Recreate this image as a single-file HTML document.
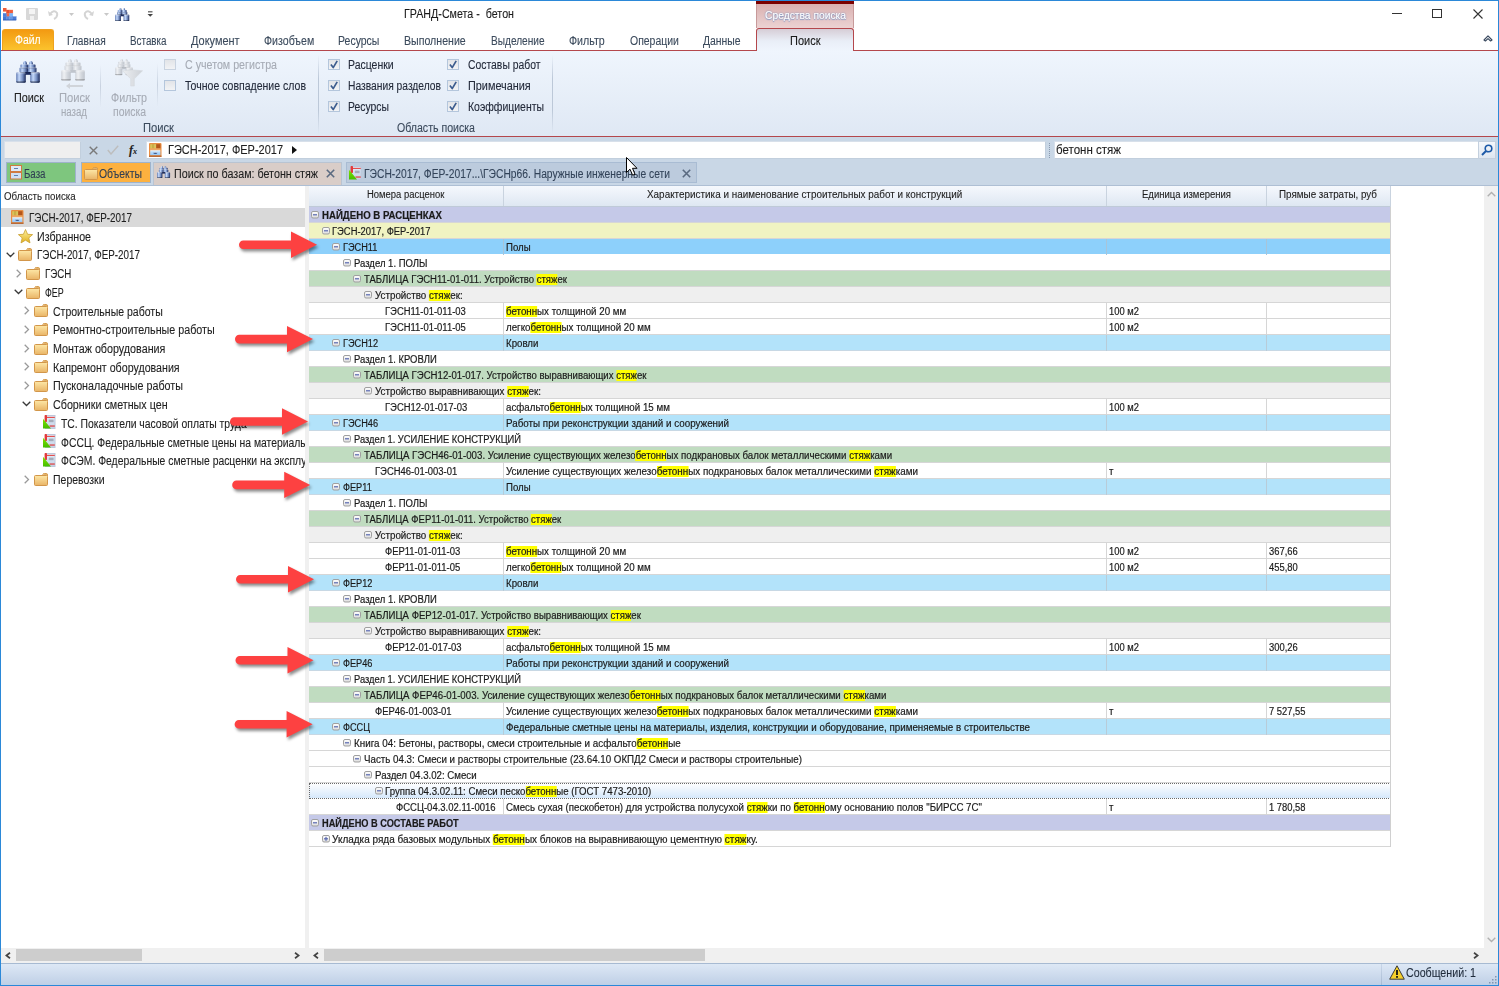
<!DOCTYPE html><html><head><meta charset="utf-8"><style>
*{margin:0;padding:0;box-sizing:border-box}
html,body{width:1499px;height:986px;overflow:hidden;background:#fff;font-family:"Liberation Sans",sans-serif;color:#1e1e1e}
.a{position:absolute}
.t{white-space:nowrap;transform-origin:0 50%;-webkit-text-stroke:0.1px currentColor}
.g{-webkit-text-stroke:0.18px currentColor}
.hl{background:#ffff00}
</style></head><body><div class="a" style="left:0px;top:0px;width:1499px;height:986px;background:#fff"></div>
<svg class="a" style="left:3px;top:8px;" width="15" height="13" viewBox="0 0 15 13"><rect x="0" y="0" width="3.3" height="3.4" fill="#ee5a36" stroke="#ee5a36" stroke-width=".3"/><rect x="3.3" y="2" width="3.3" height="3.4" fill="#e8502e" stroke="#e8502e" stroke-width=".3"/><rect x="3.3" y="5.3" width="3.3" height="3.4" fill="#f26a48" stroke="#f26a48" stroke-width=".3"/><rect x="6.6" y="2" width="3.3" height="3.4" fill="#ef5e3c" stroke="#ef5e3c" stroke-width=".3"/><rect x="0" y="5.3" width="3.3" height="3.4" fill="#4a80dc" stroke="#4a80dc" stroke-width=".3"/><rect x="6.6" y="5.3" width="3.3" height="3.4" fill="#7ab4f8" stroke="#7ab4f8" stroke-width=".3"/><rect x="0" y="8.6" width="3.3" height="3.4" fill="#4478d4" stroke="#4478d4" stroke-width=".3"/><rect x="3.3" y="8.6" width="3.3" height="3.4" fill="#5a8ce0" stroke="#5a8ce0" stroke-width=".3"/><rect x="6.6" y="8.6" width="3.3" height="3.4" fill="#6a98e4" stroke="#6a98e4" stroke-width=".3"/><rect x="9.9" y="8.6" width="3.3" height="3.4" fill="#4a7cd6" stroke="#4a7cd6" stroke-width=".3"/><path d="M0 12h13.2" stroke="#2a58b0" stroke-width=".8"/></svg>
<svg class="a" style="left:26px;top:8px;" width="12" height="12" viewBox="0 0 12 12"><rect x="0" y="0" width="12" height="12" rx="1" fill="#d8d8d8"/><rect x="3" y="1" width="6" height="5" fill="#f4f4f4"/><rect x="4" y="8" width="4" height="4" fill="#f0f0f0"/></svg>
<svg class="a" style="left:48px;top:9px;" width="11" height="11" viewBox="0 0 11 11"><path d="M2 5 Q6 0 9 4 Q10 8 6 10" fill="none" stroke="#d4d4d4" stroke-width="2"/><path d="M0 2 L1 7 L5 6 Z" fill="#d4d4d4"/></svg>
<svg class="a" style="left:69px;top:13px;" width="5" height="3" viewBox="0 0 5 3"><path d="M0 0h5l-2.5 3z" fill="#c8c8c8"/></svg>
<svg class="a" style="left:83px;top:9px;" width="11" height="11" viewBox="0 0 11 11"><path d="M9 5 Q5 0 2 4 Q1 8 5 10" fill="none" stroke="#d4d4d4" stroke-width="2"/><path d="M11 2 L10 7 L6 6 Z" fill="#d4d4d4"/></svg>
<svg class="a" style="left:104px;top:13px;" width="5" height="3" viewBox="0 0 5 3"><path d="M0 0h5l-2.5 3z" fill="#c8c8c8"/></svg>
<svg class="a" style="left:115px;top:8px;" width="15" height="14" viewBox="0 0 15 14"><defs><linearGradient id="bg115_8_60" x1="0" x2="1"><stop offset="0" stop-color="#5d78b2"/><stop offset=".3" stop-color="#c6dafb"/><stop offset=".65" stop-color="#7891c4"/><stop offset="1" stop-color="#1b2a5c"/></linearGradient><linearGradient id="bg115_8_60v" x1="0" y1="0" x2="0" y2="1"><stop offset="0" stop-color="#fff" stop-opacity=".45"/><stop offset=".25" stop-color="#fff" stop-opacity="0"/><stop offset=".8" stop-color="#000" stop-opacity="0"/><stop offset="1" stop-color="#0f1b40" stop-opacity=".8"/></linearGradient></defs><g transform="scale(0.6)"><g fill="url(#bg115_8_60)"><path d="M7 4 Q7 0 9 0 Q11 0 11 4Z"/><path d="M13 4 Q13 0 15 0 Q17 0 17 4Z"/><rect x="4.5" y="3.2" width="7.5" height="4" rx="1.2"/><rect x="12" y="3.2" width="7.5" height="4" rx="1.2"/><rect x="3.5" y="6.5" width="8.5" height="5" rx="1"/><rect x="12" y="6.5" width="8.5" height="5" rx="1"/><rect x="0.2" y="11" width="9.6" height="10.8" rx="1.5"/><rect x="14.2" y="11" width="9.6" height="10.8" rx="1.5"/></g><rect x="9" y="11" width="6" height="2.8" fill="#1b2a5c"/><g fill="url(#bg115_8_60v)"><rect x="4.5" y="3.2" width="7.5" height="4" rx="1.2"/><rect x="12" y="3.2" width="7.5" height="4" rx="1.2"/><rect x="3.5" y="6.5" width="8.5" height="5" rx="1"/><rect x="12" y="6.5" width="8.5" height="5" rx="1"/><rect x="0.2" y="11" width="9.6" height="10.8" rx="1.5"/><rect x="14.2" y="11" width="9.6" height="10.8" rx="1.5"/></g></g></svg>
<svg class="a" style="left:147px;top:10px;" width="7" height="8" viewBox="0 0 7 8"><rect x="1" y="1" width="4.5" height="1.5" fill="#777"/><path d="M0.5 4h5.5l-2.75 2.8z" fill="#444"/></svg>
<div class="a t" style="left:404px;top:7.30px;font-size:12px;line-height:14.40px;color:#1a1a1a;transform:scaleX(0.8914);">ГРАНД-Смета -&nbsp; бетон</div>
<div class="a" style="left:756px;top:1px;width:98px;height:3px;background:#7a0000"></div>
<div class="a" style="left:756px;top:4px;width:98px;height:24px;background:linear-gradient(#d9b0b0,#ecd3d3);border-left:1px solid #c79a9a;border-right:1px solid #c79a9a"></div>
<div class="a t" style="left:765px;top:8.90px;font-size:11px;line-height:13.20px;color:#ffffff;transform:scaleX(0.9345);text-shadow:0 0 2px #6f86b8,0 1px 1px #8da0c8;">Средства поиска</div>
<div class="a" style="left:1392px;top:13px;width:10px;height:1px;background:#333"></div>
<div class="a" style="left:1432px;top:9px;width:10px;height:9px;border:1px solid #333"></div>
<svg class="a" style="left:1473px;top:9px;" width="10" height="10" viewBox="0 0 10 10"><path d="M0.5 0.5L9.5 9.5M9.5 0.5L0.5 9.5" stroke="#333" stroke-width="1.1"/></svg>
<div class="a" style="left:2px;top:29px;width:52px;height:22px;background:linear-gradient(#f39a12,#fbc52f);border:1px solid #eea21e;border-bottom:none;border-radius:3px 3px 0 0"></div>
<div class="a t" style="left:15px;top:33.40px;font-size:12px;line-height:14.40px;color:#ffffff;transform:scaleX(0.8643);">Файл</div>
<div class="a t" style="left:66.8px;top:33.90px;font-size:12px;line-height:14.40px;color:#3b4a5c;transform:scaleX(0.8473);">Главная</div>
<div class="a t" style="left:130.2px;top:33.90px;font-size:12px;line-height:14.40px;color:#3b4a5c;transform:scaleX(0.8206);">Вставка</div>
<div class="a t" style="left:191px;top:33.90px;font-size:12px;line-height:14.40px;color:#3b4a5c;transform:scaleX(0.9129);">Документ</div>
<div class="a t" style="left:263.6px;top:33.90px;font-size:12px;line-height:14.40px;color:#3b4a5c;transform:scaleX(0.8843);">Физобъем</div>
<div class="a t" style="left:338.4px;top:33.90px;font-size:12px;line-height:14.40px;color:#3b4a5c;transform:scaleX(0.8750);">Ресурсы</div>
<div class="a t" style="left:404.3px;top:33.90px;font-size:12px;line-height:14.40px;color:#3b4a5c;transform:scaleX(0.8834);">Выполнение</div>
<div class="a t" style="left:490.7px;top:33.90px;font-size:12px;line-height:14.40px;color:#3b4a5c;transform:scaleX(0.8429);">Выделение</div>
<div class="a t" style="left:569px;top:33.90px;font-size:12px;line-height:14.40px;color:#3b4a5c;transform:scaleX(0.8880);">Фильтр</div>
<div class="a t" style="left:629.5px;top:33.90px;font-size:12px;line-height:14.40px;color:#3b4a5c;transform:scaleX(0.8711);">Операции</div>
<div class="a t" style="left:703px;top:33.90px;font-size:12px;line-height:14.40px;color:#3b4a5c;transform:scaleX(0.8673);">Данные</div>
<div class="a" style="left:1px;top:50px;width:1497px;height:1px;background:#b4474c"></div>
<div class="a" style="left:756px;top:28px;width:98px;height:23px;background:linear-gradient(#d6cdd6 0%,#e9eef7 55%,#eff5fd 100%);border:1px solid #b4474c;border-bottom:none;border-radius:3px 3px 0 0"></div>
<div class="a t" style="left:790px;top:33.90px;font-size:12px;line-height:14.40px;color:#1a1a1a;transform:scaleX(0.9172);">Поиск</div>
<svg class="a" style="left:1483px;top:34px;" width="10" height="8" viewBox="0 0 10 8"><path d="M1 6 L5 1.8 L9 6 L7.6 7 L5 4.6 L2.4 7 Z" fill="#fff" stroke="#3a4a60" stroke-width="1.1" stroke-linejoin="round"/></svg>
<div class="a" style="left:1px;top:51px;width:1497px;height:85px;background:linear-gradient(#eff5fd,#dfe8f4)"></div>
<div class="a" style="left:1px;top:136px;width:1497px;height:1px;background:#b4474c"></div>
<svg class="a" style="left:16px;top:61px;" width="25" height="23" viewBox="0 0 25 23"><defs><linearGradient id="bg16_61_100" x1="0" x2="1"><stop offset="0" stop-color="#5d78b2"/><stop offset=".3" stop-color="#c6dafb"/><stop offset=".65" stop-color="#7891c4"/><stop offset="1" stop-color="#1b2a5c"/></linearGradient><linearGradient id="bg16_61_100v" x1="0" y1="0" x2="0" y2="1"><stop offset="0" stop-color="#fff" stop-opacity=".45"/><stop offset=".25" stop-color="#fff" stop-opacity="0"/><stop offset=".8" stop-color="#000" stop-opacity="0"/><stop offset="1" stop-color="#0f1b40" stop-opacity=".8"/></linearGradient></defs><g transform="scale(1.0)"><g fill="url(#bg16_61_100)"><path d="M7 4 Q7 0 9 0 Q11 0 11 4Z"/><path d="M13 4 Q13 0 15 0 Q17 0 17 4Z"/><rect x="4.5" y="3.2" width="7.5" height="4" rx="1.2"/><rect x="12" y="3.2" width="7.5" height="4" rx="1.2"/><rect x="3.5" y="6.5" width="8.5" height="5" rx="1"/><rect x="12" y="6.5" width="8.5" height="5" rx="1"/><rect x="0.2" y="11" width="9.6" height="10.8" rx="1.5"/><rect x="14.2" y="11" width="9.6" height="10.8" rx="1.5"/></g><rect x="9" y="11" width="6" height="2.8" fill="#1b2a5c"/><g fill="url(#bg16_61_100v)"><rect x="4.5" y="3.2" width="7.5" height="4" rx="1.2"/><rect x="12" y="3.2" width="7.5" height="4" rx="1.2"/><rect x="3.5" y="6.5" width="8.5" height="5" rx="1"/><rect x="12" y="6.5" width="8.5" height="5" rx="1"/><rect x="0.2" y="11" width="9.6" height="10.8" rx="1.5"/><rect x="14.2" y="11" width="9.6" height="10.8" rx="1.5"/></g></g></svg>
<div class="a t" style="left:14px;top:90.90px;font-size:12px;line-height:14.40px;color:#202020;transform:scaleX(0.9022);">Поиск</div>
<svg class="a" style="left:61px;top:59px;" width="25" height="23" viewBox="0 0 25 23"><defs><linearGradient id="bg61_59_100" x1="0" x2="1"><stop offset="0" stop-color="#cfd3da"/><stop offset=".3" stop-color="#eef0f3"/><stop offset=".65" stop-color="#d3d7dd"/><stop offset="1" stop-color="#bfc4cc"/></linearGradient><linearGradient id="bg61_59_100v" x1="0" y1="0" x2="0" y2="1"><stop offset="0" stop-color="#fff" stop-opacity=".45"/><stop offset=".25" stop-color="#fff" stop-opacity="0"/><stop offset=".8" stop-color="#000" stop-opacity="0"/><stop offset="1" stop-color="#c2c6cd" stop-opacity=".8"/></linearGradient></defs><g transform="scale(1.0)"><g fill="url(#bg61_59_100)"><path d="M7 4 Q7 0 9 0 Q11 0 11 4Z"/><path d="M13 4 Q13 0 15 0 Q17 0 17 4Z"/><rect x="4.5" y="3.2" width="7.5" height="4" rx="1.2"/><rect x="12" y="3.2" width="7.5" height="4" rx="1.2"/><rect x="3.5" y="6.5" width="8.5" height="5" rx="1"/><rect x="12" y="6.5" width="8.5" height="5" rx="1"/><rect x="0.2" y="11" width="9.6" height="10.8" rx="1.5"/><rect x="14.2" y="11" width="9.6" height="10.8" rx="1.5"/></g><rect x="9" y="11" width="6" height="2.8" fill="#bfc4cc"/><g fill="url(#bg61_59_100v)"><rect x="4.5" y="3.2" width="7.5" height="4" rx="1.2"/><rect x="12" y="3.2" width="7.5" height="4" rx="1.2"/><rect x="3.5" y="6.5" width="8.5" height="5" rx="1"/><rect x="12" y="6.5" width="8.5" height="5" rx="1"/><rect x="0.2" y="11" width="9.6" height="10.8" rx="1.5"/><rect x="14.2" y="11" width="9.6" height="10.8" rx="1.5"/></g></g></svg>
<svg class="a" style="left:66px;top:83px;" width="17" height="6" viewBox="0 0 17 6"><path d="M3 3h14" stroke="#d0d4da" stroke-width="2"/><path d="M0 3l4-3v6z" fill="#d0d4da"/></svg>
<div class="a t" style="left:59px;top:90.90px;font-size:12px;line-height:14.40px;color:#a6abb5;transform:scaleX(0.9323);">Поиск</div>
<div class="a t" style="left:61px;top:104.90px;font-size:12px;line-height:14.40px;color:#a6abb5;transform:scaleX(0.8038);">назад</div>
<div class="a" style="left:100px;top:65px;width:1px;height:43px;background:linear-gradient(rgba(200,210,224,0),#c8d2e0,rgba(200,210,224,0))"></div>
<svg class="a" style="left:115px;top:59px;" width="19" height="17" viewBox="0 0 19 17"><defs><linearGradient id="bg115_59_75" x1="0" x2="1"><stop offset="0" stop-color="#cfd3da"/><stop offset=".3" stop-color="#eef0f3"/><stop offset=".65" stop-color="#d3d7dd"/><stop offset="1" stop-color="#bfc4cc"/></linearGradient><linearGradient id="bg115_59_75v" x1="0" y1="0" x2="0" y2="1"><stop offset="0" stop-color="#fff" stop-opacity=".45"/><stop offset=".25" stop-color="#fff" stop-opacity="0"/><stop offset=".8" stop-color="#000" stop-opacity="0"/><stop offset="1" stop-color="#c2c6cd" stop-opacity=".8"/></linearGradient></defs><g transform="scale(0.75)"><g fill="url(#bg115_59_75)"><path d="M7 4 Q7 0 9 0 Q11 0 11 4Z"/><path d="M13 4 Q13 0 15 0 Q17 0 17 4Z"/><rect x="4.5" y="3.2" width="7.5" height="4" rx="1.2"/><rect x="12" y="3.2" width="7.5" height="4" rx="1.2"/><rect x="3.5" y="6.5" width="8.5" height="5" rx="1"/><rect x="12" y="6.5" width="8.5" height="5" rx="1"/><rect x="0.2" y="11" width="9.6" height="10.8" rx="1.5"/><rect x="14.2" y="11" width="9.6" height="10.8" rx="1.5"/></g><rect x="9" y="11" width="6" height="2.8" fill="#bfc4cc"/><g fill="url(#bg115_59_75v)"><rect x="4.5" y="3.2" width="7.5" height="4" rx="1.2"/><rect x="12" y="3.2" width="7.5" height="4" rx="1.2"/><rect x="3.5" y="6.5" width="8.5" height="5" rx="1"/><rect x="12" y="6.5" width="8.5" height="5" rx="1"/><rect x="0.2" y="11" width="9.6" height="10.8" rx="1.5"/><rect x="14.2" y="11" width="9.6" height="10.8" rx="1.5"/></g></g></svg>
<svg class="a" style="left:122px;top:69px;" width="21" height="18" viewBox="0 0 21 18"><defs><linearGradient id="fnl" x1="0" x2="1"><stop offset="0" stop-color="#eceef1"/><stop offset="1" stop-color="#cdd1d7"/></linearGradient></defs><path d="M0.5 1.8 Q10.5 0 20.5 1.8 L12.3 9.8 L12.3 17 L8.7 17 L8.7 9.8 Z" fill="url(#fnl)" stroke="#d4d8de" stroke-width=".6"/></svg>
<div class="a t" style="left:111px;top:90.90px;font-size:12px;line-height:14.40px;color:#a6abb5;transform:scaleX(0.8930);">Фильтр</div>
<div class="a t" style="left:113px;top:104.90px;font-size:12px;line-height:14.40px;color:#a6abb5;transform:scaleX(0.8670);">поиска</div>
<div class="a" style="left:157px;top:63px;width:1px;height:44px;background:linear-gradient(rgba(200,210,224,0),#c8d2e0,rgba(200,210,224,0))"></div>
<div class="a" style="left:164px;top:59px;width:12px;height:11px;border:1px solid #c9d3e0;background:linear-gradient(#e2e4e8,#f2f3f5)"></div>
<div class="a t" style="left:184.8px;top:57.90px;font-size:12px;line-height:14.40px;color:#a6abb5;transform:scaleX(0.8896);">С учетом регистра</div>
<div class="a" style="left:164px;top:80px;width:12px;height:11px;border:1px solid #b4c6dc;background:linear-gradient(#e2e4e8,#f2f3f5)"></div>
<div class="a t" style="left:184.8px;top:79.40px;font-size:12px;line-height:14.40px;color:#232a3a;transform:scaleX(0.8773);">Точное совпадение слов</div>
<div class="a t" style="left:143px;top:121.40px;font-size:12px;line-height:14.40px;color:#3b4a5c;transform:scaleX(0.9323);">Поиск</div>
<div class="a" style="left:318px;top:55px;width:1px;height:79px;background:linear-gradient(rgba(190,200,215,0),#bcc8d8 30%,#bcc8d8 70%,rgba(190,200,215,0))"></div>
<div class="a" style="left:328px;top:59px;width:12px;height:11px;border:1px solid #b4c6dc;background:linear-gradient(#e2e4e8,#f2f3f5)"></div>
<svg class="a" style="left:330px;top:60px;" width="8" height="9" viewBox="0 0 8 9"><path d="M0.9 4.6 L3.2 7.6 L7.2 0.9" fill="none" stroke="#3c5c8e" stroke-width="1.7" stroke-linejoin="round"/></svg>
<div class="a t" style="left:348.3px;top:57.80px;font-size:12px;line-height:14.40px;color:#232a3a;transform:scaleX(0.8743);">Расценки</div>
<div class="a" style="left:328px;top:80px;width:12px;height:11px;border:1px solid #b4c6dc;background:linear-gradient(#e2e4e8,#f2f3f5)"></div>
<svg class="a" style="left:330px;top:81px;" width="8" height="9" viewBox="0 0 8 9"><path d="M0.9 4.6 L3.2 7.6 L7.2 0.9" fill="none" stroke="#3c5c8e" stroke-width="1.7" stroke-linejoin="round"/></svg>
<div class="a t" style="left:348.3px;top:78.80px;font-size:12px;line-height:14.40px;color:#232a3a;transform:scaleX(0.8556);">Названия разделов</div>
<div class="a" style="left:328px;top:101px;width:12px;height:11px;border:1px solid #b4c6dc;background:linear-gradient(#e2e4e8,#f2f3f5)"></div>
<svg class="a" style="left:330px;top:102px;" width="8" height="9" viewBox="0 0 8 9"><path d="M0.9 4.6 L3.2 7.6 L7.2 0.9" fill="none" stroke="#3c5c8e" stroke-width="1.7" stroke-linejoin="round"/></svg>
<div class="a t" style="left:348.3px;top:99.80px;font-size:12px;line-height:14.40px;color:#232a3a;transform:scaleX(0.8665);">Ресурсы</div>
<div class="a" style="left:447px;top:59px;width:12px;height:11px;border:1px solid #b4c6dc;background:linear-gradient(#e2e4e8,#f2f3f5)"></div>
<svg class="a" style="left:449px;top:60px;" width="8" height="9" viewBox="0 0 8 9"><path d="M0.9 4.6 L3.2 7.6 L7.2 0.9" fill="none" stroke="#3c5c8e" stroke-width="1.7" stroke-linejoin="round"/></svg>
<div class="a t" style="left:467.5px;top:57.80px;font-size:12px;line-height:14.40px;color:#232a3a;transform:scaleX(0.8648);">Составы работ</div>
<div class="a" style="left:447px;top:80px;width:12px;height:11px;border:1px solid #b4c6dc;background:linear-gradient(#e2e4e8,#f2f3f5)"></div>
<svg class="a" style="left:449px;top:81px;" width="8" height="9" viewBox="0 0 8 9"><path d="M0.9 4.6 L3.2 7.6 L7.2 0.9" fill="none" stroke="#3c5c8e" stroke-width="1.7" stroke-linejoin="round"/></svg>
<div class="a t" style="left:467.5px;top:78.80px;font-size:12px;line-height:14.40px;color:#232a3a;transform:scaleX(0.9050);">Примечания</div>
<div class="a" style="left:447px;top:101px;width:12px;height:11px;border:1px solid #b4c6dc;background:linear-gradient(#e2e4e8,#f2f3f5)"></div>
<svg class="a" style="left:449px;top:102px;" width="8" height="9" viewBox="0 0 8 9"><path d="M0.9 4.6 L3.2 7.6 L7.2 0.9" fill="none" stroke="#3c5c8e" stroke-width="1.7" stroke-linejoin="round"/></svg>
<div class="a t" style="left:467.5px;top:99.80px;font-size:12px;line-height:14.40px;color:#232a3a;transform:scaleX(0.8712);">Коэффициенты</div>
<div class="a t" style="left:396.7px;top:121.40px;font-size:12px;line-height:14.40px;color:#3b4a5c;transform:scaleX(0.8815);">Область поиска</div>
<div class="a" style="left:552px;top:55px;width:1px;height:79px;background:linear-gradient(rgba(190,200,215,0),#bcc8d8 30%,#bcc8d8 70%,rgba(190,200,215,0))"></div>
<div class="a" style="left:1px;top:137px;width:1497px;height:49px;background:#c9d7e6"></div>
<div class="a" style="left:4px;top:141px;width:77px;height:18px;background:#efefef;border:1px solid #c2cfdd;border-top-color:#d8e0ea;border-left-color:#d8e0ea"></div>
<svg class="a" style="left:89px;top:146px;" width="9" height="9" viewBox="0 0 9 9"><path d="M0.7 0.7L8.3 8.3M8.3 0.7L0.7 8.3" stroke="#7a7a7a" stroke-width="1.4"/></svg>
<svg class="a" style="left:107px;top:145px;" width="12" height="10" viewBox="0 0 12 10"><path d="M0.8 5 L4 9 L11.2 0.8" fill="none" stroke="#bdbdbd" stroke-width="1.4"/></svg>
<div class="a t" style="left:129px;top:142.80px;font-size:12px;line-height:14.40px;color:#222;font-family:'Liberation Serif',serif;font-style:italic;font-weight:bold;">f<span style="font-size:8px">x</span></div>
<div class="a" style="left:146px;top:141px;width:900px;height:18px;background:#fff;border:1px solid #c2cfdd;border-top-color:#d8e0ea;border-left-color:#d8e0ea"></div>
<svg class="a" style="left:149px;top:143px;" width="13" height="14" viewBox="0 0 13 14"><defs><linearGradient id="dbd" x1="0" y1="0" x2="0" y2="1"><stop offset="0" stop-color="#f4faff"/><stop offset=".35" stop-color="#b8dcfc"/><stop offset="1" stop-color="#98c8f8"/></linearGradient></defs><rect x="0" y="0" width="12.5" height="14" rx="1" fill="#e98e42"/><rect x="1.2" y="1.2" width="2" height="4.2" fill="#d6c458"/><rect x="3.2" y="1.2" width="2" height="4.2" fill="#c8b048"/><rect x="5.2" y="1.2" width="2" height="4.2" fill="#d8c860"/><rect x="7.2" y="1.2" width="4.2" height="4.2" fill="#b4561a"/><rect x="1" y="5.6" width="10.5" height="1" fill="#f2b878"/><rect x="1.2" y="7.2" width="10.2" height="5" fill="url(#dbd)"/><ellipse cx="6.3" cy="10" rx="2" ry="0.9" fill="#3a5a90"/><path d="M4.5 9.3h3.6" stroke="#fff" stroke-width=".7"/><rect x="0" y="12.6" width="12.5" height="1.4" fill="#b86a38"/></svg>
<div class="a t" style="left:168px;top:143.40px;font-size:12px;line-height:14.40px;color:#1e1e1e;transform:scaleX(0.9153);">ГЭСН-2017, ФЕР-2017</div>
<svg class="a" style="left:292px;top:146px;" width="5" height="8" viewBox="0 0 5 8"><path d="M0 0 L5 4 L0 8Z" fill="#111"/></svg>
<svg class="a" style="left:1048px;top:142px;" width="3" height="16" viewBox="0 0 3 16"><rect x="1" y="1" width="1" height="1" fill="#8a9ab0"/><rect x="1" y="3" width="1" height="1" fill="#8a9ab0"/><rect x="1" y="5" width="1" height="1" fill="#8a9ab0"/><rect x="1" y="7" width="1" height="1" fill="#8a9ab0"/><rect x="1" y="9" width="1" height="1" fill="#8a9ab0"/><rect x="1" y="11" width="1" height="1" fill="#8a9ab0"/><rect x="1" y="13" width="1" height="1" fill="#8a9ab0"/><rect x="1" y="15" width="1" height="1" fill="#8a9ab0"/></svg>
<div class="a" style="left:1054px;top:141px;width:425px;height:18px;background:#fff;border:1px solid #c2cfdd;border-top-color:#d8e0ea;border-left-color:#d8e0ea"></div>
<div class="a t" style="left:1056px;top:143.40px;font-size:12px;line-height:14.40px;color:#1e1e1e;transform:scaleX(0.9607);">бетонн стяж</div>
<div class="a" style="left:1478px;top:141px;width:18px;height:18px;background:linear-gradient(#f4f7fb,#dfe7f1);border:1px solid #c4d0de"></div>
<svg class="a" style="left:1481px;top:144px;" width="12" height="12" viewBox="0 0 12 12"><circle cx="7.5" cy="4.5" r="3.3" fill="none" stroke="#1d5aa8" stroke-width="1.6"/><path d="M5 7 L1 11" stroke="#1d5aa8" stroke-width="2"/></svg>
<div class="a" style="left:6px;top:162px;width:70px;height:21px;background:#7ec67e;border:1px solid #9fb3cb"></div>
<svg class="a" style="left:10px;top:165px;" width="12" height="15" viewBox="0 0 12 15"><rect x=".5" y=".5" width="11" height="6" fill="#dfe9f6" stroke="#d07a40"/><rect x=".5" y="7.5" width="11" height="6.5" fill="#cfe0f4" stroke="#d07a40"/><path d="M4 3.5h4M4 10.5h4" stroke="#6080b0"/></svg>
<div class="a t" style="left:24px;top:166.90px;font-size:12px;line-height:14.40px;color:#2f3e52;transform:scaleX(0.8086);">База</div>
<div class="a" style="left:81px;top:162px;width:70px;height:21px;background:#fdb13f;border:1px solid #9fb3cb"></div>
<svg class="a" style="left:84px;top:167px;" width="14" height="13" viewBox="0 0 14 13"><defs><linearGradient id="fg" x1="0" y1="0" x2="0" y2="1"><stop offset="0" stop-color="#fde7a6"/><stop offset="1" stop-color="#e9b466"/></linearGradient></defs><path d="M8.5 1.5 Q9 0.5 10.5 0.5 L12.5 0.5 Q13.5 0.5 13.5 2 L13.5 3" fill="#e2b26a" stroke="#d59a4c" stroke-width="1"/><rect x="0.5" y="2.5" width="13" height="10" rx="1" fill="url(#fg)" stroke="#d2964a" stroke-width="1"/></svg>
<div class="a t" style="left:99px;top:166.90px;font-size:12px;line-height:14.40px;color:#2f3e52;transform:scaleX(0.8689);">Объекты</div>
<div class="a" style="left:153px;top:162px;width:189px;height:23px;background:#d9cdc8;border:1px solid #b9c4d2;border-bottom:none"></div>
<svg class="a" style="left:157px;top:166px;" width="14" height="13" viewBox="0 0 14 13"><defs><linearGradient id="bg157_166_55" x1="0" x2="1"><stop offset="0" stop-color="#5d78b2"/><stop offset=".3" stop-color="#c6dafb"/><stop offset=".65" stop-color="#7891c4"/><stop offset="1" stop-color="#1b2a5c"/></linearGradient><linearGradient id="bg157_166_55v" x1="0" y1="0" x2="0" y2="1"><stop offset="0" stop-color="#fff" stop-opacity=".45"/><stop offset=".25" stop-color="#fff" stop-opacity="0"/><stop offset=".8" stop-color="#000" stop-opacity="0"/><stop offset="1" stop-color="#0f1b40" stop-opacity=".8"/></linearGradient></defs><g transform="scale(0.55)"><g fill="url(#bg157_166_55)"><path d="M7 4 Q7 0 9 0 Q11 0 11 4Z"/><path d="M13 4 Q13 0 15 0 Q17 0 17 4Z"/><rect x="4.5" y="3.2" width="7.5" height="4" rx="1.2"/><rect x="12" y="3.2" width="7.5" height="4" rx="1.2"/><rect x="3.5" y="6.5" width="8.5" height="5" rx="1"/><rect x="12" y="6.5" width="8.5" height="5" rx="1"/><rect x="0.2" y="11" width="9.6" height="10.8" rx="1.5"/><rect x="14.2" y="11" width="9.6" height="10.8" rx="1.5"/></g><rect x="9" y="11" width="6" height="2.8" fill="#1b2a5c"/><g fill="url(#bg157_166_55v)"><rect x="4.5" y="3.2" width="7.5" height="4" rx="1.2"/><rect x="12" y="3.2" width="7.5" height="4" rx="1.2"/><rect x="3.5" y="6.5" width="8.5" height="5" rx="1"/><rect x="12" y="6.5" width="8.5" height="5" rx="1"/><rect x="0.2" y="11" width="9.6" height="10.8" rx="1.5"/><rect x="14.2" y="11" width="9.6" height="10.8" rx="1.5"/></g></g></svg>
<div class="a t" style="left:174px;top:166.90px;font-size:12px;line-height:14.40px;color:#1e1e1e;transform:scaleX(0.8945);">Поиск по базам: бетонн стяж</div>
<svg class="a" style="left:326px;top:169px;" width="9" height="9" viewBox="0 0 9 9"><path d="M0.8 0.8L8.2 8.2M8.2 0.8L0.8 8.2" stroke="#5a6a80" stroke-width="1.6"/></svg>
<div class="a" style="left:346px;top:162px;width:351px;height:21px;background:#bccbdd;border:1px solid #a9bcd3"></div>
<svg class="a" style="left:349px;top:166px;" width="13" height="14" viewBox="0 0 13 14"><defs><linearGradient id="dcg" x1="0" y1="0" x2="0" y2="1"><stop offset="0" stop-color="#80e400"/><stop offset="1" stop-color="#44bc00"/></linearGradient><linearGradient id="dcp" x1="0" y1="0" x2="0" y2="1"><stop offset="0" stop-color="#e2f0fc"/><stop offset="1" stop-color="#c4d0e4"/></linearGradient></defs><rect x="2.5" y="0.5" width="9.5" height="13" fill="url(#dcp)" stroke="#bcc8dc"/><rect x="4" y="1.8" width="7.8" height="1.2" fill="#e25050"/><rect x="1.6" y="0" width="2.4" height="7" rx=".8" fill="#e43a3a"/><rect x="5.8" y="4.6" width="4.8" height="2.6" fill="#a6acba"/><rect x="6.5" y="10.4" width="5.3" height="1.3" fill="#e04848"/><path d="M0 13.6 L0 3.8 L8 13.6 Z" fill="url(#dcg)"/></svg>
<div class="a t" style="left:364.2px;top:166.90px;font-size:12px;line-height:14.40px;color:#33445a;transform:scaleX(0.8567);">ГЭСН-2017, ФЕР-2017...\ГЭСНр66. Наружные инженерные сети</div>
<svg class="a" style="left:682px;top:169px;" width="9" height="9" viewBox="0 0 9 9"><path d="M0.8 0.8L8.2 8.2M8.2 0.8L0.8 8.2" stroke="#5a6a80" stroke-width="1.6"/></svg>
<div class="a" style="left:1px;top:185px;width:1497px;height:1px;background:#aebfd4"></div>
<div class="a" style="left:1px;top:186px;width:304px;height:762px;background:#fff"></div>
<div class="a t" style="left:4px;top:190.40px;font-size:11px;line-height:13.20px;color:#262626;transform:scaleX(0.8827);">Область поиска</div>
<div class="a" style="left:1px;top:208px;width:304px;height:19px;background:#d9d9d9"></div>
<div class="a" style="left:0;top:0;width:305px;height:948px;overflow:hidden">
<svg class="a" style="left:11px;top:210px;" width="13" height="14" viewBox="0 0 13 14"><defs><linearGradient id="dbd" x1="0" y1="0" x2="0" y2="1"><stop offset="0" stop-color="#f4faff"/><stop offset=".35" stop-color="#b8dcfc"/><stop offset="1" stop-color="#98c8f8"/></linearGradient></defs><rect x="0" y="0" width="12.5" height="14" rx="1" fill="#e98e42"/><rect x="1.2" y="1.2" width="2" height="4.2" fill="#d6c458"/><rect x="3.2" y="1.2" width="2" height="4.2" fill="#c8b048"/><rect x="5.2" y="1.2" width="2" height="4.2" fill="#d8c860"/><rect x="7.2" y="1.2" width="4.2" height="4.2" fill="#b4561a"/><rect x="1" y="5.6" width="10.5" height="1" fill="#f2b878"/><rect x="1.2" y="7.2" width="10.2" height="5" fill="url(#dbd)"/><ellipse cx="6.3" cy="10" rx="2" ry="0.9" fill="#3a5a90"/><path d="M4.5 9.3h3.6" stroke="#fff" stroke-width=".7"/><rect x="0" y="12.6" width="12.5" height="1.4" fill="#b86a38"/></svg>
<div class="a t" style="left:29px;top:211.00px;font-size:12px;line-height:14.40px;color:#1e1e1e;transform:scaleX(0.8198);">ГЭСН-2017, ФЕР-2017</div>
<svg class="a" style="left:18px;top:229px;" width="15" height="15" viewBox="0 0 15 15"><defs><linearGradient id="sg" x1="0" y1="0" x2="0" y2="1"><stop offset="0" stop-color="#fff3a0"/><stop offset="1" stop-color="#e0b020"/></linearGradient></defs><path d="M7.5 0.5 L9.6 5.3 L14.6 5.6 L10.8 8.9 L12 13.9 L7.5 11.2 L3 13.9 L4.2 8.9 L0.4 5.6 L5.4 5.3 Z" fill="url(#sg)" stroke="#c9a030" stroke-width=".8"/></svg>
<div class="a t" style="left:36.5px;top:229.71px;font-size:12px;line-height:14.40px;color:#1e1e1e;transform:scaleX(0.8879);">Избранное</div>
<svg class="a" style="left:6.0px;top:252px;" width="9" height="6" viewBox="0 0 9 6"><path d="M0.7 0.7 L4.5 4.5 L8.3 0.7" fill="none" stroke="#3a3a3a" stroke-width="1.3"/></svg>
<svg class="a" style="left:18.0px;top:248px;" width="14" height="13" viewBox="0 0 14 13"><defs><linearGradient id="fg" x1="0" y1="0" x2="0" y2="1"><stop offset="0" stop-color="#fde7a6"/><stop offset="1" stop-color="#e9b466"/></linearGradient></defs><path d="M8.5 1.5 Q9 0.5 10.5 0.5 L12.5 0.5 Q13.5 0.5 13.5 2 L13.5 3" fill="#e2b26a" stroke="#d59a4c" stroke-width="1"/><rect x="0.5" y="2.5" width="13" height="10" rx="1" fill="url(#fg)" stroke="#d2964a" stroke-width="1"/></svg>
<div class="a t" style="left:36.5px;top:248.42px;font-size:12px;line-height:14.40px;color:#1e1e1e;transform:scaleX(0.8198);">ГЭСН-2017, ФЕР-2017</div>
<svg class="a" style="left:16.2px;top:269px;" width="6" height="9" viewBox="0 0 6 9"><path d="M0.7 0.7 L4.5 4.5 L0.7 8.3" fill="none" stroke="#9a9a9a" stroke-width="1.3"/></svg>
<svg class="a" style="left:26.2px;top:267px;" width="14" height="13" viewBox="0 0 14 13"><defs><linearGradient id="fg" x1="0" y1="0" x2="0" y2="1"><stop offset="0" stop-color="#fde7a6"/><stop offset="1" stop-color="#e9b466"/></linearGradient></defs><path d="M8.5 1.5 Q9 0.5 10.5 0.5 L12.5 0.5 Q13.5 0.5 13.5 2 L13.5 3" fill="#e2b26a" stroke="#d59a4c" stroke-width="1"/><rect x="0.5" y="2.5" width="13" height="10" rx="1" fill="url(#fg)" stroke="#d2964a" stroke-width="1"/></svg>
<div class="a t" style="left:44.7px;top:267.13px;font-size:12px;line-height:14.40px;color:#1e1e1e;transform:scaleX(0.8134);">ГЭСН</div>
<svg class="a" style="left:14.2px;top:289px;" width="9" height="6" viewBox="0 0 9 6"><path d="M0.7 0.7 L4.5 4.5 L8.3 0.7" fill="none" stroke="#3a3a3a" stroke-width="1.3"/></svg>
<svg class="a" style="left:26.2px;top:286px;" width="14" height="13" viewBox="0 0 14 13"><defs><linearGradient id="fg" x1="0" y1="0" x2="0" y2="1"><stop offset="0" stop-color="#fde7a6"/><stop offset="1" stop-color="#e9b466"/></linearGradient></defs><path d="M8.5 1.5 Q9 0.5 10.5 0.5 L12.5 0.5 Q13.5 0.5 13.5 2 L13.5 3" fill="#e2b26a" stroke="#d59a4c" stroke-width="1"/><rect x="0.5" y="2.5" width="13" height="10" rx="1" fill="url(#fg)" stroke="#d2964a" stroke-width="1"/></svg>
<div class="a t" style="left:44.7px;top:285.84px;font-size:12px;line-height:14.40px;color:#1e1e1e;transform:scaleX(0.7441);">ФЕР</div>
<svg class="a" style="left:24.4px;top:306px;" width="6" height="9" viewBox="0 0 6 9"><path d="M0.7 0.7 L4.5 4.5 L0.7 8.3" fill="none" stroke="#9a9a9a" stroke-width="1.3"/></svg>
<svg class="a" style="left:34.4px;top:304px;" width="14" height="13" viewBox="0 0 14 13"><defs><linearGradient id="fg" x1="0" y1="0" x2="0" y2="1"><stop offset="0" stop-color="#fde7a6"/><stop offset="1" stop-color="#e9b466"/></linearGradient></defs><path d="M8.5 1.5 Q9 0.5 10.5 0.5 L12.5 0.5 Q13.5 0.5 13.5 2 L13.5 3" fill="#e2b26a" stroke="#d59a4c" stroke-width="1"/><rect x="0.5" y="2.5" width="13" height="10" rx="1" fill="url(#fg)" stroke="#d2964a" stroke-width="1"/></svg>
<div class="a t" style="left:52.9px;top:304.55px;font-size:12px;line-height:14.40px;color:#1e1e1e;transform:scaleX(0.8768);">Строительные работы</div>
<svg class="a" style="left:24.4px;top:325px;" width="6" height="9" viewBox="0 0 6 9"><path d="M0.7 0.7 L4.5 4.5 L0.7 8.3" fill="none" stroke="#9a9a9a" stroke-width="1.3"/></svg>
<svg class="a" style="left:34.4px;top:323px;" width="14" height="13" viewBox="0 0 14 13"><defs><linearGradient id="fg" x1="0" y1="0" x2="0" y2="1"><stop offset="0" stop-color="#fde7a6"/><stop offset="1" stop-color="#e9b466"/></linearGradient></defs><path d="M8.5 1.5 Q9 0.5 10.5 0.5 L12.5 0.5 Q13.5 0.5 13.5 2 L13.5 3" fill="#e2b26a" stroke="#d59a4c" stroke-width="1"/><rect x="0.5" y="2.5" width="13" height="10" rx="1" fill="url(#fg)" stroke="#d2964a" stroke-width="1"/></svg>
<div class="a t" style="left:52.9px;top:323.26px;font-size:12px;line-height:14.40px;color:#1e1e1e;transform:scaleX(0.8936);">Ремонтно-строительные работы</div>
<svg class="a" style="left:24.4px;top:344px;" width="6" height="9" viewBox="0 0 6 9"><path d="M0.7 0.7 L4.5 4.5 L0.7 8.3" fill="none" stroke="#9a9a9a" stroke-width="1.3"/></svg>
<svg class="a" style="left:34.4px;top:342px;" width="14" height="13" viewBox="0 0 14 13"><defs><linearGradient id="fg" x1="0" y1="0" x2="0" y2="1"><stop offset="0" stop-color="#fde7a6"/><stop offset="1" stop-color="#e9b466"/></linearGradient></defs><path d="M8.5 1.5 Q9 0.5 10.5 0.5 L12.5 0.5 Q13.5 0.5 13.5 2 L13.5 3" fill="#e2b26a" stroke="#d59a4c" stroke-width="1"/><rect x="0.5" y="2.5" width="13" height="10" rx="1" fill="url(#fg)" stroke="#d2964a" stroke-width="1"/></svg>
<div class="a t" style="left:52.9px;top:341.97px;font-size:12px;line-height:14.40px;color:#1e1e1e;transform:scaleX(0.8948);">Монтаж оборудования</div>
<svg class="a" style="left:24.4px;top:362px;" width="6" height="9" viewBox="0 0 6 9"><path d="M0.7 0.7 L4.5 4.5 L0.7 8.3" fill="none" stroke="#9a9a9a" stroke-width="1.3"/></svg>
<svg class="a" style="left:34.4px;top:360px;" width="14" height="13" viewBox="0 0 14 13"><defs><linearGradient id="fg" x1="0" y1="0" x2="0" y2="1"><stop offset="0" stop-color="#fde7a6"/><stop offset="1" stop-color="#e9b466"/></linearGradient></defs><path d="M8.5 1.5 Q9 0.5 10.5 0.5 L12.5 0.5 Q13.5 0.5 13.5 2 L13.5 3" fill="#e2b26a" stroke="#d59a4c" stroke-width="1"/><rect x="0.5" y="2.5" width="13" height="10" rx="1" fill="url(#fg)" stroke="#d2964a" stroke-width="1"/></svg>
<div class="a t" style="left:52.9px;top:360.68px;font-size:12px;line-height:14.40px;color:#1e1e1e;transform:scaleX(0.8874);">Капремонт оборудования</div>
<svg class="a" style="left:24.4px;top:381px;" width="6" height="9" viewBox="0 0 6 9"><path d="M0.7 0.7 L4.5 4.5 L0.7 8.3" fill="none" stroke="#9a9a9a" stroke-width="1.3"/></svg>
<svg class="a" style="left:34.4px;top:379px;" width="14" height="13" viewBox="0 0 14 13"><defs><linearGradient id="fg" x1="0" y1="0" x2="0" y2="1"><stop offset="0" stop-color="#fde7a6"/><stop offset="1" stop-color="#e9b466"/></linearGradient></defs><path d="M8.5 1.5 Q9 0.5 10.5 0.5 L12.5 0.5 Q13.5 0.5 13.5 2 L13.5 3" fill="#e2b26a" stroke="#d59a4c" stroke-width="1"/><rect x="0.5" y="2.5" width="13" height="10" rx="1" fill="url(#fg)" stroke="#d2964a" stroke-width="1"/></svg>
<div class="a t" style="left:52.9px;top:379.39px;font-size:12px;line-height:14.40px;color:#1e1e1e;transform:scaleX(0.8946);">Пусконаладочные работы</div>
<svg class="a" style="left:22.4px;top:401px;" width="9" height="6" viewBox="0 0 9 6"><path d="M0.7 0.7 L4.5 4.5 L8.3 0.7" fill="none" stroke="#3a3a3a" stroke-width="1.3"/></svg>
<svg class="a" style="left:34.4px;top:398px;" width="14" height="13" viewBox="0 0 14 13"><defs><linearGradient id="fg" x1="0" y1="0" x2="0" y2="1"><stop offset="0" stop-color="#fde7a6"/><stop offset="1" stop-color="#e9b466"/></linearGradient></defs><path d="M8.5 1.5 Q9 0.5 10.5 0.5 L12.5 0.5 Q13.5 0.5 13.5 2 L13.5 3" fill="#e2b26a" stroke="#d59a4c" stroke-width="1"/><rect x="0.5" y="2.5" width="13" height="10" rx="1" fill="url(#fg)" stroke="#d2964a" stroke-width="1"/></svg>
<div class="a t" style="left:52.9px;top:398.10px;font-size:12px;line-height:14.40px;color:#1e1e1e;transform:scaleX(0.8943);">Сборники сметных цен</div>
<svg class="a" style="left:43px;top:415px;" width="13" height="14" viewBox="0 0 13 14"><defs><linearGradient id="dcg" x1="0" y1="0" x2="0" y2="1"><stop offset="0" stop-color="#80e400"/><stop offset="1" stop-color="#44bc00"/></linearGradient><linearGradient id="dcp" x1="0" y1="0" x2="0" y2="1"><stop offset="0" stop-color="#e2f0fc"/><stop offset="1" stop-color="#c4d0e4"/></linearGradient></defs><rect x="2.5" y="0.5" width="9.5" height="13" fill="url(#dcp)" stroke="#bcc8dc"/><rect x="4" y="1.8" width="7.8" height="1.2" fill="#e25050"/><rect x="1.6" y="0" width="2.4" height="7" rx=".8" fill="#e43a3a"/><rect x="5.8" y="4.6" width="4.8" height="2.6" fill="#a6acba"/><rect x="6.5" y="10.4" width="5.3" height="1.3" fill="#e04848"/><path d="M0 13.6 L0 3.8 L8 13.6 Z" fill="url(#dcg)"/></svg>
<div class="a t" style="left:61.2px;top:416.81px;font-size:12px;line-height:14.40px;color:#1e1e1e;transform:scaleX(0.8650);">ТС. Показатели часовой оплаты труда</div>
<svg class="a" style="left:43px;top:434px;" width="13" height="14" viewBox="0 0 13 14"><defs><linearGradient id="dcg" x1="0" y1="0" x2="0" y2="1"><stop offset="0" stop-color="#80e400"/><stop offset="1" stop-color="#44bc00"/></linearGradient><linearGradient id="dcp" x1="0" y1="0" x2="0" y2="1"><stop offset="0" stop-color="#e2f0fc"/><stop offset="1" stop-color="#c4d0e4"/></linearGradient></defs><rect x="2.5" y="0.5" width="9.5" height="13" fill="url(#dcp)" stroke="#bcc8dc"/><rect x="4" y="1.8" width="7.8" height="1.2" fill="#e25050"/><rect x="1.6" y="0" width="2.4" height="7" rx=".8" fill="#e43a3a"/><rect x="5.8" y="4.6" width="4.8" height="2.6" fill="#a6acba"/><rect x="6.5" y="10.4" width="5.3" height="1.3" fill="#e04848"/><path d="M0 13.6 L0 3.8 L8 13.6 Z" fill="url(#dcg)"/></svg>
<div class="a t" style="left:61.2px;top:435.52px;font-size:12px;line-height:14.40px;color:#1e1e1e;transform:scaleX(0.8650);">ФССЦ. Федеральные сметные цены на материалы, изделия и конструкции</div>
<svg class="a" style="left:43px;top:453px;" width="13" height="14" viewBox="0 0 13 14"><defs><linearGradient id="dcg" x1="0" y1="0" x2="0" y2="1"><stop offset="0" stop-color="#80e400"/><stop offset="1" stop-color="#44bc00"/></linearGradient><linearGradient id="dcp" x1="0" y1="0" x2="0" y2="1"><stop offset="0" stop-color="#e2f0fc"/><stop offset="1" stop-color="#c4d0e4"/></linearGradient></defs><rect x="2.5" y="0.5" width="9.5" height="13" fill="url(#dcp)" stroke="#bcc8dc"/><rect x="4" y="1.8" width="7.8" height="1.2" fill="#e25050"/><rect x="1.6" y="0" width="2.4" height="7" rx=".8" fill="#e43a3a"/><rect x="5.8" y="4.6" width="4.8" height="2.6" fill="#a6acba"/><rect x="6.5" y="10.4" width="5.3" height="1.3" fill="#e04848"/><path d="M0 13.6 L0 3.8 L8 13.6 Z" fill="url(#dcg)"/></svg>
<div class="a t" style="left:61.2px;top:454.23px;font-size:12px;line-height:14.40px;color:#1e1e1e;transform:scaleX(0.8650);">ФСЭМ. Федеральные сметные расценки на эксплуатацию машин</div>
<svg class="a" style="left:24.4px;top:475px;" width="6" height="9" viewBox="0 0 6 9"><path d="M0.7 0.7 L4.5 4.5 L0.7 8.3" fill="none" stroke="#9a9a9a" stroke-width="1.3"/></svg>
<svg class="a" style="left:34.4px;top:473px;" width="14" height="13" viewBox="0 0 14 13"><defs><linearGradient id="fg" x1="0" y1="0" x2="0" y2="1"><stop offset="0" stop-color="#fde7a6"/><stop offset="1" stop-color="#e9b466"/></linearGradient></defs><path d="M8.5 1.5 Q9 0.5 10.5 0.5 L12.5 0.5 Q13.5 0.5 13.5 2 L13.5 3" fill="#e2b26a" stroke="#d59a4c" stroke-width="1"/><rect x="0.5" y="2.5" width="13" height="10" rx="1" fill="url(#fg)" stroke="#d2964a" stroke-width="1"/></svg>
<div class="a t" style="left:52.9px;top:472.94px;font-size:12px;line-height:14.40px;color:#1e1e1e;transform:scaleX(0.8763);">Перевозки</div>
</div>
<div class="a" style="left:305px;top:186px;width:4px;height:776px;background:#f0f0f0"></div>
<div class="a" style="left:309px;top:186px;width:1175px;height:762px;background:#fff"></div>
<div class="a" style="left:309px;top:186px;width:1082px;height:21px;background:linear-gradient(#f5f8fd,#dee7f2);border-bottom:1px solid #bfcad8"></div>
<div class="a" style="left:503px;top:186px;width:1px;height:20px;background:#c9d3df"></div>
<div class="a" style="left:1106px;top:186px;width:1px;height:20px;background:#c9d3df"></div>
<div class="a" style="left:1266px;top:186px;width:1px;height:20px;background:#c9d3df"></div>
<div class="a" style="left:1390px;top:186px;width:1px;height:21px;background:#c9d3df"></div>
<div class="a t" style="left:366.7px;top:188.50px;font-size:10px;line-height:12.00px;color:#1e1e1e;transform:scaleX(0.9441);">Номера расценок</div>
<div class="a t" style="left:646.5px;top:188.50px;font-size:10px;line-height:12.00px;color:#1e1e1e;transform:scaleX(0.9906);">Характеристика и наименование строительных работ и конструкций</div>
<div class="a t" style="left:1141.5px;top:188.50px;font-size:10px;line-height:12.00px;color:#1e1e1e;transform:scaleX(0.9516);">Единица измерения</div>
<div class="a t" style="left:1278.5px;top:188.50px;font-size:10px;line-height:12.00px;color:#1e1e1e;transform:scaleX(0.9851);">Прямые затраты, руб</div>
<div class="a" style="left:309px;top:207px;width:1082px;height:15px;background:#c5c9e8"></div>
<div class="a" style="left:309px;top:222px;width:1082px;height:1px;background:#d6d6d6"></div>
<svg class="a" style="left:310.5px;top:210.5px;" width="9" height="9" viewBox="0 0 9 9"><defs><linearGradient id="exg" x1="0" y1="0" x2="0" y2="1"><stop offset="0" stop-color="#ffffff"/><stop offset="1" stop-color="#dcdcdc"/></linearGradient></defs><rect x=".5" y=".5" width="7" height="6.5" rx="1.5" fill="url(#exg)" stroke="#a0a0a0" stroke-width="1"/><rect x="2" y="3.2" width="4" height="1.2" fill="#5868b0"/></svg>
<div class="a t g" style="left:321.70px;top:209px;font-size:10px;line-height:13px;color:#1a1a1a;font-weight:bold;transform:scaleX(0.9648)">НАЙДЕНО В РАСЦЕНКАХ</div>
<div class="a" style="left:309px;top:223px;width:1082px;height:15px;background:#f0f3c2"></div>
<div class="a" style="left:309px;top:238px;width:1082px;height:1px;background:#d6d6d6"></div>
<svg class="a" style="left:321.5px;top:226.5px;" width="9" height="9" viewBox="0 0 9 9"><defs><linearGradient id="exg" x1="0" y1="0" x2="0" y2="1"><stop offset="0" stop-color="#ffffff"/><stop offset="1" stop-color="#dcdcdc"/></linearGradient></defs><rect x=".5" y=".5" width="7" height="6.5" rx="1.5" fill="url(#exg)" stroke="#a0a0a0" stroke-width="1"/><rect x="2" y="3.2" width="4" height="1.2" fill="#5868b0"/></svg>
<div class="a t g" style="left:332.32px;top:225px;font-size:10px;line-height:13px;color:#1a1a1a;transform:scaleX(0.9396)">ГЭСН-2017, ФЕР-2017</div>
<div class="a" style="left:309px;top:239px;width:1082px;height:15px;background:#8dd0fb"></div>
<div class="a" style="left:309px;top:254px;width:1082px;height:1px;#9cc0dc"></div>
<div class="a" style="left:503px;top:239px;width:1px;height:16px;background:#a8c4d8"></div>
<div class="a" style="left:1106px;top:239px;width:1px;height:16px;background:#a8c4d8"></div>
<div class="a" style="left:1266px;top:239px;width:1px;height:16px;background:#a8c4d8"></div>
<svg class="a" style="left:331.5px;top:242.5px;" width="9" height="9" viewBox="0 0 9 9"><defs><linearGradient id="exg" x1="0" y1="0" x2="0" y2="1"><stop offset="0" stop-color="#ffffff"/><stop offset="1" stop-color="#dcdcdc"/></linearGradient></defs><rect x=".5" y=".5" width="7" height="6.5" rx="1.5" fill="url(#exg)" stroke="#a0a0a0" stroke-width="1"/><rect x="2" y="3.2" width="4" height="1.2" fill="#5868b0"/></svg>
<div class="a t g" style="left:342.94px;top:241px;font-size:10px;line-height:13px;color:#1a1a1a;transform:scaleX(0.9180)">ГЭСН11</div>
<div class="a t g" style="left:505.50px;top:241px;font-size:10px;line-height:13px;color:#1a1a1a;transform:scaleX(0.9620)">Полы</div>
<div class="a" style="left:309px;top:255px;width:1082px;height:15px;background:#fff"></div>
<div class="a" style="left:309px;top:270px;width:1082px;height:1px;background:#d6d6d6"></div>
<svg class="a" style="left:342.5px;top:258.5px;" width="9" height="9" viewBox="0 0 9 9"><defs><linearGradient id="exg" x1="0" y1="0" x2="0" y2="1"><stop offset="0" stop-color="#ffffff"/><stop offset="1" stop-color="#dcdcdc"/></linearGradient></defs><rect x=".5" y=".5" width="7" height="6.5" rx="1.5" fill="url(#exg)" stroke="#a0a0a0" stroke-width="1"/><rect x="2" y="3.2" width="4" height="1.2" fill="#5868b0"/></svg>
<div class="a t g" style="left:353.56px;top:257px;font-size:10px;line-height:13px;color:#1a1a1a;transform:scaleX(0.9515)">Раздел 1. ПОЛЫ</div>
<div class="a" style="left:309px;top:271px;width:1082px;height:15px;background:#c0dcc0"></div>
<div class="a" style="left:309px;top:286px;width:1082px;height:1px;background:#d6d6d6"></div>
<svg class="a" style="left:352.5px;top:274.5px;" width="9" height="9" viewBox="0 0 9 9"><defs><linearGradient id="exg" x1="0" y1="0" x2="0" y2="1"><stop offset="0" stop-color="#ffffff"/><stop offset="1" stop-color="#dcdcdc"/></linearGradient></defs><rect x=".5" y=".5" width="7" height="6.5" rx="1.5" fill="url(#exg)" stroke="#a0a0a0" stroke-width="1"/><rect x="2" y="3.2" width="4" height="1.2" fill="#5868b0"/></svg>
<div class="a t g" style="left:364.18px;top:273px;font-size:10px;line-height:13px;color:#1a1a1a;transform:scaleX(0.9522)">ТАБЛИЦА ГЭСН11-01-011. Устройство <span class="hl">стяж</span>ек</div>
<div class="a" style="left:309px;top:287px;width:1082px;height:15px;background:#efefef"></div>
<div class="a" style="left:309px;top:302px;width:1082px;height:1px;background:#d6d6d6"></div>
<svg class="a" style="left:363.5px;top:290.5px;" width="9" height="9" viewBox="0 0 9 9"><defs><linearGradient id="exg" x1="0" y1="0" x2="0" y2="1"><stop offset="0" stop-color="#ffffff"/><stop offset="1" stop-color="#dcdcdc"/></linearGradient></defs><rect x=".5" y=".5" width="7" height="6.5" rx="1.5" fill="url(#exg)" stroke="#a0a0a0" stroke-width="1"/><rect x="2" y="3.2" width="4" height="1.2" fill="#5868b0"/></svg>
<div class="a t g" style="left:374.80px;top:289px;font-size:10px;line-height:13px;color:#1a1a1a;transform:scaleX(0.9797)">Устройство <span class="hl">стяж</span>ек:</div>
<div class="a" style="left:309px;top:318px;width:1082px;height:1px;background:#d6d6d6"></div>
<div class="a" style="left:503px;top:303px;width:1px;height:16px;background:#d6d6d6"></div>
<div class="a" style="left:1106px;top:303px;width:1px;height:16px;background:#d6d6d6"></div>
<div class="a" style="left:1266px;top:303px;width:1px;height:16px;background:#d6d6d6"></div>
<div class="a t g" style="left:385.42px;top:305px;font-size:10px;line-height:13px;color:#1a1a1a;transform:scaleX(0.9435)">ГЭСН11-01-011-03</div>
<div class="a t g" style="left:505.50px;top:305px;font-size:10px;line-height:13px;color:#1a1a1a;transform:scaleX(0.9735)"><span class="hl">бетонн</span>ых толщиной 20 мм</div>
<div class="a t g" style="left:1108.50px;top:305px;font-size:10px;line-height:13px;color:#1a1a1a;transform:scaleX(0.9365)">100 м2</div>
<div class="a" style="left:309px;top:334px;width:1082px;height:1px;background:#d6d6d6"></div>
<div class="a" style="left:503px;top:319px;width:1px;height:16px;background:#d6d6d6"></div>
<div class="a" style="left:1106px;top:319px;width:1px;height:16px;background:#d6d6d6"></div>
<div class="a" style="left:1266px;top:319px;width:1px;height:16px;background:#d6d6d6"></div>
<div class="a t g" style="left:385.42px;top:321px;font-size:10px;line-height:13px;color:#1a1a1a;transform:scaleX(0.9435)">ГЭСН11-01-011-05</div>
<div class="a t g" style="left:505.50px;top:321px;font-size:10px;line-height:13px;color:#1a1a1a;transform:scaleX(0.9745)">легко<span class="hl">бетонн</span>ых толщиной 20 мм</div>
<div class="a t g" style="left:1108.50px;top:321px;font-size:10px;line-height:13px;color:#1a1a1a;transform:scaleX(0.9365)">100 м2</div>
<div class="a" style="left:309px;top:335px;width:1082px;height:15px;background:#b3e3fa"></div>
<div class="a" style="left:309px;top:350px;width:1082px;height:1px;background:#c8d8e4"></div>
<div class="a" style="left:503px;top:335px;width:1px;height:16px;background:#b8ccd8"></div>
<div class="a" style="left:1106px;top:335px;width:1px;height:16px;background:#b8ccd8"></div>
<div class="a" style="left:1266px;top:335px;width:1px;height:16px;background:#b8ccd8"></div>
<svg class="a" style="left:331.5px;top:338.5px;" width="9" height="9" viewBox="0 0 9 9"><defs><linearGradient id="exg" x1="0" y1="0" x2="0" y2="1"><stop offset="0" stop-color="#ffffff"/><stop offset="1" stop-color="#dcdcdc"/></linearGradient></defs><rect x=".5" y=".5" width="7" height="6.5" rx="1.5" fill="url(#exg)" stroke="#a0a0a0" stroke-width="1"/><rect x="2" y="3.2" width="4" height="1.2" fill="#5868b0"/></svg>
<div class="a t g" style="left:342.94px;top:337px;font-size:10px;line-height:13px;color:#1a1a1a;transform:scaleX(0.9180)">ГЭСН12</div>
<div class="a t g" style="left:505.50px;top:337px;font-size:10px;line-height:13px;color:#1a1a1a;transform:scaleX(0.9685)">Кровли</div>
<div class="a" style="left:309px;top:351px;width:1082px;height:15px;background:#fff"></div>
<div class="a" style="left:309px;top:366px;width:1082px;height:1px;background:#d6d6d6"></div>
<svg class="a" style="left:342.5px;top:354.5px;" width="9" height="9" viewBox="0 0 9 9"><defs><linearGradient id="exg" x1="0" y1="0" x2="0" y2="1"><stop offset="0" stop-color="#ffffff"/><stop offset="1" stop-color="#dcdcdc"/></linearGradient></defs><rect x=".5" y=".5" width="7" height="6.5" rx="1.5" fill="url(#exg)" stroke="#a0a0a0" stroke-width="1"/><rect x="2" y="3.2" width="4" height="1.2" fill="#5868b0"/></svg>
<div class="a t g" style="left:353.56px;top:353px;font-size:10px;line-height:13px;color:#1a1a1a;transform:scaleX(0.9476)">Раздел 1. КРОВЛИ</div>
<div class="a" style="left:309px;top:367px;width:1082px;height:15px;background:#c0dcc0"></div>
<div class="a" style="left:309px;top:382px;width:1082px;height:1px;background:#d6d6d6"></div>
<svg class="a" style="left:352.5px;top:370.5px;" width="9" height="9" viewBox="0 0 9 9"><defs><linearGradient id="exg" x1="0" y1="0" x2="0" y2="1"><stop offset="0" stop-color="#ffffff"/><stop offset="1" stop-color="#dcdcdc"/></linearGradient></defs><rect x=".5" y=".5" width="7" height="6.5" rx="1.5" fill="url(#exg)" stroke="#a0a0a0" stroke-width="1"/><rect x="2" y="3.2" width="4" height="1.2" fill="#5868b0"/></svg>
<div class="a t g" style="left:364.18px;top:369px;font-size:10px;line-height:13px;color:#1a1a1a;transform:scaleX(0.9595)">ТАБЛИЦА ГЭСН12-01-017. Устройство выравнивающих <span class="hl">стяж</span>ек</div>
<div class="a" style="left:309px;top:383px;width:1082px;height:15px;background:#efefef"></div>
<div class="a" style="left:309px;top:398px;width:1082px;height:1px;background:#d6d6d6"></div>
<svg class="a" style="left:363.5px;top:386.5px;" width="9" height="9" viewBox="0 0 9 9"><defs><linearGradient id="exg" x1="0" y1="0" x2="0" y2="1"><stop offset="0" stop-color="#ffffff"/><stop offset="1" stop-color="#dcdcdc"/></linearGradient></defs><rect x=".5" y=".5" width="7" height="6.5" rx="1.5" fill="url(#exg)" stroke="#a0a0a0" stroke-width="1"/><rect x="2" y="3.2" width="4" height="1.2" fill="#5868b0"/></svg>
<div class="a t g" style="left:374.80px;top:385px;font-size:10px;line-height:13px;color:#1a1a1a;transform:scaleX(0.9794)">Устройство выравнивающих <span class="hl">стяж</span>ек:</div>
<div class="a" style="left:309px;top:414px;width:1082px;height:1px;background:#d6d6d6"></div>
<div class="a" style="left:503px;top:399px;width:1px;height:16px;background:#d6d6d6"></div>
<div class="a" style="left:1106px;top:399px;width:1px;height:16px;background:#d6d6d6"></div>
<div class="a" style="left:1266px;top:399px;width:1px;height:16px;background:#d6d6d6"></div>
<div class="a t g" style="left:385.42px;top:401px;font-size:10px;line-height:13px;color:#1a1a1a;transform:scaleX(0.9435)">ГЭСН12-01-017-03</div>
<div class="a t g" style="left:505.50px;top:401px;font-size:10px;line-height:13px;color:#1a1a1a;transform:scaleX(0.9750)">асфальто<span class="hl">бетонн</span>ых толщиной 15 мм</div>
<div class="a t g" style="left:1108.50px;top:401px;font-size:10px;line-height:13px;color:#1a1a1a;transform:scaleX(0.9365)">100 м2</div>
<div class="a" style="left:309px;top:415px;width:1082px;height:15px;background:#b3e3fa"></div>
<div class="a" style="left:309px;top:430px;width:1082px;height:1px;background:#c8d8e4"></div>
<div class="a" style="left:503px;top:415px;width:1px;height:16px;background:#b8ccd8"></div>
<div class="a" style="left:1106px;top:415px;width:1px;height:16px;background:#b8ccd8"></div>
<div class="a" style="left:1266px;top:415px;width:1px;height:16px;background:#b8ccd8"></div>
<svg class="a" style="left:331.5px;top:418.5px;" width="9" height="9" viewBox="0 0 9 9"><defs><linearGradient id="exg" x1="0" y1="0" x2="0" y2="1"><stop offset="0" stop-color="#ffffff"/><stop offset="1" stop-color="#dcdcdc"/></linearGradient></defs><rect x=".5" y=".5" width="7" height="6.5" rx="1.5" fill="url(#exg)" stroke="#a0a0a0" stroke-width="1"/><rect x="2" y="3.2" width="4" height="1.2" fill="#5868b0"/></svg>
<div class="a t g" style="left:342.94px;top:417px;font-size:10px;line-height:13px;color:#1a1a1a;transform:scaleX(0.9180)">ГЭСН46</div>
<div class="a t g" style="left:505.50px;top:417px;font-size:10px;line-height:13px;color:#1a1a1a;transform:scaleX(0.9825)">Работы при реконструкции зданий и сооружений</div>
<div class="a" style="left:309px;top:431px;width:1082px;height:15px;background:#fff"></div>
<div class="a" style="left:309px;top:446px;width:1082px;height:1px;background:#d6d6d6"></div>
<svg class="a" style="left:342.5px;top:434.5px;" width="9" height="9" viewBox="0 0 9 9"><defs><linearGradient id="exg" x1="0" y1="0" x2="0" y2="1"><stop offset="0" stop-color="#ffffff"/><stop offset="1" stop-color="#dcdcdc"/></linearGradient></defs><rect x=".5" y=".5" width="7" height="6.5" rx="1.5" fill="url(#exg)" stroke="#a0a0a0" stroke-width="1"/><rect x="2" y="3.2" width="4" height="1.2" fill="#5868b0"/></svg>
<div class="a t g" style="left:353.56px;top:433px;font-size:10px;line-height:13px;color:#1a1a1a;transform:scaleX(0.9335)">Раздел 1. УСИЛЕНИЕ КОНСТРУКЦИЙ</div>
<div class="a" style="left:309px;top:447px;width:1082px;height:15px;background:#c0dcc0"></div>
<div class="a" style="left:309px;top:462px;width:1082px;height:1px;background:#d6d6d6"></div>
<svg class="a" style="left:352.5px;top:450.5px;" width="9" height="9" viewBox="0 0 9 9"><defs><linearGradient id="exg" x1="0" y1="0" x2="0" y2="1"><stop offset="0" stop-color="#ffffff"/><stop offset="1" stop-color="#dcdcdc"/></linearGradient></defs><rect x=".5" y=".5" width="7" height="6.5" rx="1.5" fill="url(#exg)" stroke="#a0a0a0" stroke-width="1"/><rect x="2" y="3.2" width="4" height="1.2" fill="#5868b0"/></svg>
<div class="a t g" style="left:364.18px;top:449px;font-size:10px;line-height:13px;color:#1a1a1a;transform:scaleX(0.9685)">ТАБЛИЦА ГЭСН46-01-003. Усиление существующих железо<span class="hl">бетонн</span>ых подкрановых балок металлическими <span class="hl">стяж</span>ками</div>
<div class="a" style="left:309px;top:478px;width:1082px;height:1px;background:#d6d6d6"></div>
<div class="a" style="left:503px;top:463px;width:1px;height:16px;background:#d6d6d6"></div>
<div class="a" style="left:1106px;top:463px;width:1px;height:16px;background:#d6d6d6"></div>
<div class="a" style="left:1266px;top:463px;width:1px;height:16px;background:#d6d6d6"></div>
<div class="a t g" style="left:374.80px;top:465px;font-size:10px;line-height:13px;color:#1a1a1a;transform:scaleX(0.9435)">ГЭСН46-01-003-01</div>
<div class="a t g" style="left:505.50px;top:465px;font-size:10px;line-height:13px;color:#1a1a1a;transform:scaleX(0.9870)">Усиление существующих железо<span class="hl">бетонн</span>ых подкрановых балок металлическими <span class="hl">стяж</span>ками</div>
<div class="a t g" style="left:1108.50px;top:465px;font-size:10px;line-height:13px;color:#1a1a1a;transform:scaleX(0.9790)">т</div>
<div class="a" style="left:309px;top:479px;width:1082px;height:15px;background:#b3e3fa"></div>
<div class="a" style="left:309px;top:494px;width:1082px;height:1px;background:#c8d8e4"></div>
<div class="a" style="left:503px;top:479px;width:1px;height:16px;background:#b8ccd8"></div>
<div class="a" style="left:1106px;top:479px;width:1px;height:16px;background:#b8ccd8"></div>
<div class="a" style="left:1266px;top:479px;width:1px;height:16px;background:#b8ccd8"></div>
<svg class="a" style="left:331.5px;top:482.5px;" width="9" height="9" viewBox="0 0 9 9"><defs><linearGradient id="exg" x1="0" y1="0" x2="0" y2="1"><stop offset="0" stop-color="#ffffff"/><stop offset="1" stop-color="#dcdcdc"/></linearGradient></defs><rect x=".5" y=".5" width="7" height="6.5" rx="1.5" fill="url(#exg)" stroke="#a0a0a0" stroke-width="1"/><rect x="2" y="3.2" width="4" height="1.2" fill="#5868b0"/></svg>
<div class="a t g" style="left:342.94px;top:481px;font-size:10px;line-height:13px;color:#1a1a1a;transform:scaleX(0.9180)">ФЕР11</div>
<div class="a t g" style="left:505.50px;top:481px;font-size:10px;line-height:13px;color:#1a1a1a;transform:scaleX(0.9620)">Полы</div>
<div class="a" style="left:309px;top:495px;width:1082px;height:15px;background:#fff"></div>
<div class="a" style="left:309px;top:510px;width:1082px;height:1px;background:#d6d6d6"></div>
<svg class="a" style="left:342.5px;top:498.5px;" width="9" height="9" viewBox="0 0 9 9"><defs><linearGradient id="exg" x1="0" y1="0" x2="0" y2="1"><stop offset="0" stop-color="#ffffff"/><stop offset="1" stop-color="#dcdcdc"/></linearGradient></defs><rect x=".5" y=".5" width="7" height="6.5" rx="1.5" fill="url(#exg)" stroke="#a0a0a0" stroke-width="1"/><rect x="2" y="3.2" width="4" height="1.2" fill="#5868b0"/></svg>
<div class="a t g" style="left:353.56px;top:497px;font-size:10px;line-height:13px;color:#1a1a1a;transform:scaleX(0.9515)">Раздел 1. ПОЛЫ</div>
<div class="a" style="left:309px;top:511px;width:1082px;height:15px;background:#c0dcc0"></div>
<div class="a" style="left:309px;top:526px;width:1082px;height:1px;background:#d6d6d6"></div>
<svg class="a" style="left:352.5px;top:514.5px;" width="9" height="9" viewBox="0 0 9 9"><defs><linearGradient id="exg" x1="0" y1="0" x2="0" y2="1"><stop offset="0" stop-color="#ffffff"/><stop offset="1" stop-color="#dcdcdc"/></linearGradient></defs><rect x=".5" y=".5" width="7" height="6.5" rx="1.5" fill="url(#exg)" stroke="#a0a0a0" stroke-width="1"/><rect x="2" y="3.2" width="4" height="1.2" fill="#5868b0"/></svg>
<div class="a t g" style="left:364.18px;top:513px;font-size:10px;line-height:13px;color:#1a1a1a;transform:scaleX(0.9532)">ТАБЛИЦА ФЕР11-01-011. Устройство <span class="hl">стяж</span>ек</div>
<div class="a" style="left:309px;top:527px;width:1082px;height:15px;background:#efefef"></div>
<div class="a" style="left:309px;top:542px;width:1082px;height:1px;background:#d6d6d6"></div>
<svg class="a" style="left:363.5px;top:530.5px;" width="9" height="9" viewBox="0 0 9 9"><defs><linearGradient id="exg" x1="0" y1="0" x2="0" y2="1"><stop offset="0" stop-color="#ffffff"/><stop offset="1" stop-color="#dcdcdc"/></linearGradient></defs><rect x=".5" y=".5" width="7" height="6.5" rx="1.5" fill="url(#exg)" stroke="#a0a0a0" stroke-width="1"/><rect x="2" y="3.2" width="4" height="1.2" fill="#5868b0"/></svg>
<div class="a t g" style="left:374.80px;top:529px;font-size:10px;line-height:13px;color:#1a1a1a;transform:scaleX(0.9797)">Устройство <span class="hl">стяж</span>ек:</div>
<div class="a" style="left:309px;top:558px;width:1082px;height:1px;background:#d6d6d6"></div>
<div class="a" style="left:503px;top:543px;width:1px;height:16px;background:#d6d6d6"></div>
<div class="a" style="left:1106px;top:543px;width:1px;height:16px;background:#d6d6d6"></div>
<div class="a" style="left:1266px;top:543px;width:1px;height:16px;background:#d6d6d6"></div>
<div class="a t g" style="left:385.42px;top:545px;font-size:10px;line-height:13px;color:#1a1a1a;transform:scaleX(0.9454)">ФЕР11-01-011-03</div>
<div class="a t g" style="left:505.50px;top:545px;font-size:10px;line-height:13px;color:#1a1a1a;transform:scaleX(0.9735)"><span class="hl">бетонн</span>ых толщиной 20 мм</div>
<div class="a t g" style="left:1108.50px;top:545px;font-size:10px;line-height:13px;color:#1a1a1a;transform:scaleX(0.9365)">100 м2</div>
<div class="a t g" style="left:1268.50px;top:545px;font-size:10px;line-height:13px;color:#1a1a1a;transform:scaleX(0.9382)">367,66</div>
<div class="a" style="left:309px;top:574px;width:1082px;height:1px;background:#d6d6d6"></div>
<div class="a" style="left:503px;top:559px;width:1px;height:16px;background:#d6d6d6"></div>
<div class="a" style="left:1106px;top:559px;width:1px;height:16px;background:#d6d6d6"></div>
<div class="a" style="left:1266px;top:559px;width:1px;height:16px;background:#d6d6d6"></div>
<div class="a t g" style="left:385.42px;top:561px;font-size:10px;line-height:13px;color:#1a1a1a;transform:scaleX(0.9454)">ФЕР11-01-011-05</div>
<div class="a t g" style="left:505.50px;top:561px;font-size:10px;line-height:13px;color:#1a1a1a;transform:scaleX(0.9745)">легко<span class="hl">бетонн</span>ых толщиной 20 мм</div>
<div class="a t g" style="left:1108.50px;top:561px;font-size:10px;line-height:13px;color:#1a1a1a;transform:scaleX(0.9365)">100 м2</div>
<div class="a t g" style="left:1268.50px;top:561px;font-size:10px;line-height:13px;color:#1a1a1a;transform:scaleX(0.9382)">455,80</div>
<div class="a" style="left:309px;top:575px;width:1082px;height:15px;background:#b3e3fa"></div>
<div class="a" style="left:309px;top:590px;width:1082px;height:1px;background:#c8d8e4"></div>
<div class="a" style="left:503px;top:575px;width:1px;height:16px;background:#b8ccd8"></div>
<div class="a" style="left:1106px;top:575px;width:1px;height:16px;background:#b8ccd8"></div>
<div class="a" style="left:1266px;top:575px;width:1px;height:16px;background:#b8ccd8"></div>
<svg class="a" style="left:331.5px;top:578.5px;" width="9" height="9" viewBox="0 0 9 9"><defs><linearGradient id="exg" x1="0" y1="0" x2="0" y2="1"><stop offset="0" stop-color="#ffffff"/><stop offset="1" stop-color="#dcdcdc"/></linearGradient></defs><rect x=".5" y=".5" width="7" height="6.5" rx="1.5" fill="url(#exg)" stroke="#a0a0a0" stroke-width="1"/><rect x="2" y="3.2" width="4" height="1.2" fill="#5868b0"/></svg>
<div class="a t g" style="left:342.94px;top:577px;font-size:10px;line-height:13px;color:#1a1a1a;transform:scaleX(0.9180)">ФЕР12</div>
<div class="a t g" style="left:505.50px;top:577px;font-size:10px;line-height:13px;color:#1a1a1a;transform:scaleX(0.9685)">Кровли</div>
<div class="a" style="left:309px;top:591px;width:1082px;height:15px;background:#fff"></div>
<div class="a" style="left:309px;top:606px;width:1082px;height:1px;background:#d6d6d6"></div>
<svg class="a" style="left:342.5px;top:594.5px;" width="9" height="9" viewBox="0 0 9 9"><defs><linearGradient id="exg" x1="0" y1="0" x2="0" y2="1"><stop offset="0" stop-color="#ffffff"/><stop offset="1" stop-color="#dcdcdc"/></linearGradient></defs><rect x=".5" y=".5" width="7" height="6.5" rx="1.5" fill="url(#exg)" stroke="#a0a0a0" stroke-width="1"/><rect x="2" y="3.2" width="4" height="1.2" fill="#5868b0"/></svg>
<div class="a t g" style="left:353.56px;top:593px;font-size:10px;line-height:13px;color:#1a1a1a;transform:scaleX(0.9476)">Раздел 1. КРОВЛИ</div>
<div class="a" style="left:309px;top:607px;width:1082px;height:15px;background:#c0dcc0"></div>
<div class="a" style="left:309px;top:622px;width:1082px;height:1px;background:#d6d6d6"></div>
<svg class="a" style="left:352.5px;top:610.5px;" width="9" height="9" viewBox="0 0 9 9"><defs><linearGradient id="exg" x1="0" y1="0" x2="0" y2="1"><stop offset="0" stop-color="#ffffff"/><stop offset="1" stop-color="#dcdcdc"/></linearGradient></defs><rect x=".5" y=".5" width="7" height="6.5" rx="1.5" fill="url(#exg)" stroke="#a0a0a0" stroke-width="1"/><rect x="2" y="3.2" width="4" height="1.2" fill="#5868b0"/></svg>
<div class="a t g" style="left:364.18px;top:609px;font-size:10px;line-height:13px;color:#1a1a1a;transform:scaleX(0.9604)">ТАБЛИЦА ФЕР12-01-017. Устройство выравнивающих <span class="hl">стяж</span>ек</div>
<div class="a" style="left:309px;top:623px;width:1082px;height:15px;background:#efefef"></div>
<div class="a" style="left:309px;top:638px;width:1082px;height:1px;background:#d6d6d6"></div>
<svg class="a" style="left:363.5px;top:626.5px;" width="9" height="9" viewBox="0 0 9 9"><defs><linearGradient id="exg" x1="0" y1="0" x2="0" y2="1"><stop offset="0" stop-color="#ffffff"/><stop offset="1" stop-color="#dcdcdc"/></linearGradient></defs><rect x=".5" y=".5" width="7" height="6.5" rx="1.5" fill="url(#exg)" stroke="#a0a0a0" stroke-width="1"/><rect x="2" y="3.2" width="4" height="1.2" fill="#5868b0"/></svg>
<div class="a t g" style="left:374.80px;top:625px;font-size:10px;line-height:13px;color:#1a1a1a;transform:scaleX(0.9794)">Устройство выравнивающих <span class="hl">стяж</span>ек:</div>
<div class="a" style="left:309px;top:654px;width:1082px;height:1px;background:#d6d6d6"></div>
<div class="a" style="left:503px;top:639px;width:1px;height:16px;background:#d6d6d6"></div>
<div class="a" style="left:1106px;top:639px;width:1px;height:16px;background:#d6d6d6"></div>
<div class="a" style="left:1266px;top:639px;width:1px;height:16px;background:#d6d6d6"></div>
<div class="a t g" style="left:385.42px;top:641px;font-size:10px;line-height:13px;color:#1a1a1a;transform:scaleX(0.9454)">ФЕР12-01-017-03</div>
<div class="a t g" style="left:505.50px;top:641px;font-size:10px;line-height:13px;color:#1a1a1a;transform:scaleX(0.9750)">асфальто<span class="hl">бетонн</span>ых толщиной 15 мм</div>
<div class="a t g" style="left:1108.50px;top:641px;font-size:10px;line-height:13px;color:#1a1a1a;transform:scaleX(0.9365)">100 м2</div>
<div class="a t g" style="left:1268.50px;top:641px;font-size:10px;line-height:13px;color:#1a1a1a;transform:scaleX(0.9382)">300,26</div>
<div class="a" style="left:309px;top:655px;width:1082px;height:15px;background:#b3e3fa"></div>
<div class="a" style="left:309px;top:670px;width:1082px;height:1px;background:#c8d8e4"></div>
<div class="a" style="left:503px;top:655px;width:1px;height:16px;background:#b8ccd8"></div>
<div class="a" style="left:1106px;top:655px;width:1px;height:16px;background:#b8ccd8"></div>
<div class="a" style="left:1266px;top:655px;width:1px;height:16px;background:#b8ccd8"></div>
<svg class="a" style="left:331.5px;top:658.5px;" width="9" height="9" viewBox="0 0 9 9"><defs><linearGradient id="exg" x1="0" y1="0" x2="0" y2="1"><stop offset="0" stop-color="#ffffff"/><stop offset="1" stop-color="#dcdcdc"/></linearGradient></defs><rect x=".5" y=".5" width="7" height="6.5" rx="1.5" fill="url(#exg)" stroke="#a0a0a0" stroke-width="1"/><rect x="2" y="3.2" width="4" height="1.2" fill="#5868b0"/></svg>
<div class="a t g" style="left:342.94px;top:657px;font-size:10px;line-height:13px;color:#1a1a1a;transform:scaleX(0.9180)">ФЕР46</div>
<div class="a t g" style="left:505.50px;top:657px;font-size:10px;line-height:13px;color:#1a1a1a;transform:scaleX(0.9825)">Работы при реконструкции зданий и сооружений</div>
<div class="a" style="left:309px;top:671px;width:1082px;height:15px;background:#fff"></div>
<div class="a" style="left:309px;top:686px;width:1082px;height:1px;background:#d6d6d6"></div>
<svg class="a" style="left:342.5px;top:674.5px;" width="9" height="9" viewBox="0 0 9 9"><defs><linearGradient id="exg" x1="0" y1="0" x2="0" y2="1"><stop offset="0" stop-color="#ffffff"/><stop offset="1" stop-color="#dcdcdc"/></linearGradient></defs><rect x=".5" y=".5" width="7" height="6.5" rx="1.5" fill="url(#exg)" stroke="#a0a0a0" stroke-width="1"/><rect x="2" y="3.2" width="4" height="1.2" fill="#5868b0"/></svg>
<div class="a t g" style="left:353.56px;top:673px;font-size:10px;line-height:13px;color:#1a1a1a;transform:scaleX(0.9335)">Раздел 1. УСИЛЕНИЕ КОНСТРУКЦИЙ</div>
<div class="a" style="left:309px;top:687px;width:1082px;height:15px;background:#c0dcc0"></div>
<div class="a" style="left:309px;top:702px;width:1082px;height:1px;background:#d6d6d6"></div>
<svg class="a" style="left:352.5px;top:690.5px;" width="9" height="9" viewBox="0 0 9 9"><defs><linearGradient id="exg" x1="0" y1="0" x2="0" y2="1"><stop offset="0" stop-color="#ffffff"/><stop offset="1" stop-color="#dcdcdc"/></linearGradient></defs><rect x=".5" y=".5" width="7" height="6.5" rx="1.5" fill="url(#exg)" stroke="#a0a0a0" stroke-width="1"/><rect x="2" y="3.2" width="4" height="1.2" fill="#5868b0"/></svg>
<div class="a t g" style="left:364.18px;top:689px;font-size:10px;line-height:13px;color:#1a1a1a;transform:scaleX(0.9690)">ТАБЛИЦА ФЕР46-01-003. Усиление существующих железо<span class="hl">бетонн</span>ых подкрановых балок металлическими <span class="hl">стяж</span>ками</div>
<div class="a" style="left:309px;top:718px;width:1082px;height:1px;background:#d6d6d6"></div>
<div class="a" style="left:503px;top:703px;width:1px;height:16px;background:#d6d6d6"></div>
<div class="a" style="left:1106px;top:703px;width:1px;height:16px;background:#d6d6d6"></div>
<div class="a" style="left:1266px;top:703px;width:1px;height:16px;background:#d6d6d6"></div>
<div class="a t g" style="left:374.80px;top:705px;font-size:10px;line-height:13px;color:#1a1a1a;transform:scaleX(0.9454)">ФЕР46-01-003-01</div>
<div class="a t g" style="left:505.50px;top:705px;font-size:10px;line-height:13px;color:#1a1a1a;transform:scaleX(0.9870)">Усиление существующих железо<span class="hl">бетонн</span>ых подкрановых балок металлическими <span class="hl">стяж</span>ками</div>
<div class="a t g" style="left:1108.50px;top:705px;font-size:10px;line-height:13px;color:#1a1a1a;transform:scaleX(0.9790)">т</div>
<div class="a t g" style="left:1268.50px;top:705px;font-size:10px;line-height:13px;color:#1a1a1a;transform:scaleX(0.9382)">7 527,55</div>
<div class="a" style="left:309px;top:719px;width:1082px;height:15px;background:#b3e3fa"></div>
<div class="a" style="left:309px;top:734px;width:1082px;height:1px;background:#c8d8e4"></div>
<div class="a" style="left:503px;top:719px;width:1px;height:16px;background:#b8ccd8"></div>
<div class="a" style="left:1106px;top:719px;width:1px;height:16px;background:#b8ccd8"></div>
<div class="a" style="left:1266px;top:719px;width:1px;height:16px;background:#b8ccd8"></div>
<svg class="a" style="left:331.5px;top:722.5px;" width="9" height="9" viewBox="0 0 9 9"><defs><linearGradient id="exg" x1="0" y1="0" x2="0" y2="1"><stop offset="0" stop-color="#ffffff"/><stop offset="1" stop-color="#dcdcdc"/></linearGradient></defs><rect x=".5" y=".5" width="7" height="6.5" rx="1.5" fill="url(#exg)" stroke="#a0a0a0" stroke-width="1"/><rect x="2" y="3.2" width="4" height="1.2" fill="#5868b0"/></svg>
<div class="a t g" style="left:342.94px;top:721px;font-size:10px;line-height:13px;color:#1a1a1a;transform:scaleX(0.9180)">ФССЦ</div>
<div class="a t g" style="left:505.50px;top:721px;font-size:10px;line-height:13px;color:#1a1a1a;transform:scaleX(0.9803)">Федеральные сметные цены на материалы, изделия, конструкции и оборудование, применяемые в строительстве</div>
<div class="a" style="left:309px;top:735px;width:1082px;height:15px;background:#fff"></div>
<div class="a" style="left:309px;top:750px;width:1082px;height:1px;background:#d6d6d6"></div>
<svg class="a" style="left:342.5px;top:738.5px;" width="9" height="9" viewBox="0 0 9 9"><defs><linearGradient id="exg" x1="0" y1="0" x2="0" y2="1"><stop offset="0" stop-color="#ffffff"/><stop offset="1" stop-color="#dcdcdc"/></linearGradient></defs><rect x=".5" y=".5" width="7" height="6.5" rx="1.5" fill="url(#exg)" stroke="#a0a0a0" stroke-width="1"/><rect x="2" y="3.2" width="4" height="1.2" fill="#5868b0"/></svg>
<div class="a t g" style="left:353.56px;top:737px;font-size:10px;line-height:13px;color:#1a1a1a;transform:scaleX(0.9846)">Книга 04: Бетоны, растворы, смеси строительные и асфальто<span class="hl">бетонн</span>ые</div>
<div class="a" style="left:309px;top:751px;width:1082px;height:15px;background:#fff"></div>
<div class="a" style="left:309px;top:766px;width:1082px;height:1px;background:#d6d6d6"></div>
<svg class="a" style="left:352.5px;top:754.5px;" width="9" height="9" viewBox="0 0 9 9"><defs><linearGradient id="exg" x1="0" y1="0" x2="0" y2="1"><stop offset="0" stop-color="#ffffff"/><stop offset="1" stop-color="#dcdcdc"/></linearGradient></defs><rect x=".5" y=".5" width="7" height="6.5" rx="1.5" fill="url(#exg)" stroke="#a0a0a0" stroke-width="1"/><rect x="2" y="3.2" width="4" height="1.2" fill="#5868b0"/></svg>
<div class="a t g" style="left:364.18px;top:753px;font-size:10px;line-height:13px;color:#1a1a1a;transform:scaleX(0.9748)">Часть 04.3: Смеси и растворы строительные (23.64.10 ОКПД2 Смеси и растворы строительные)</div>
<div class="a" style="left:309px;top:767px;width:1082px;height:15px;background:#fff"></div>
<div class="a" style="left:309px;top:782px;width:1082px;height:1px;background:#d6d6d6"></div>
<svg class="a" style="left:363.5px;top:770.5px;" width="9" height="9" viewBox="0 0 9 9"><defs><linearGradient id="exg" x1="0" y1="0" x2="0" y2="1"><stop offset="0" stop-color="#ffffff"/><stop offset="1" stop-color="#dcdcdc"/></linearGradient></defs><rect x=".5" y=".5" width="7" height="6.5" rx="1.5" fill="url(#exg)" stroke="#a0a0a0" stroke-width="1"/><rect x="2" y="3.2" width="4" height="1.2" fill="#5868b0"/></svg>
<div class="a t g" style="left:374.80px;top:769px;font-size:10px;line-height:13px;color:#1a1a1a;transform:scaleX(0.9677)">Раздел 04.3.02: Смеси</div>
<div class="a" style="left:309px;top:783px;width:1082px;height:15px;background:linear-gradient(#ffffff,#d6e8fb)"></div>
<div class="a" style="left:309px;top:783px;width:1082px;height:16px;border:1px dotted #6a6a6a"></div>
<svg class="a" style="left:374.5px;top:786.5px;" width="9" height="9" viewBox="0 0 9 9"><defs><linearGradient id="exg" x1="0" y1="0" x2="0" y2="1"><stop offset="0" stop-color="#ffffff"/><stop offset="1" stop-color="#dcdcdc"/></linearGradient></defs><rect x=".5" y=".5" width="7" height="6.5" rx="1.5" fill="url(#exg)" stroke="#a0a0a0" stroke-width="1"/><rect x="2" y="3.2" width="4" height="1.2" fill="#5868b0"/></svg>
<div class="a t g" style="left:385.42px;top:785px;font-size:10px;line-height:13px;color:#1a1a1a;transform:scaleX(0.9644)">Группа 04.3.02.11: Смеси песко<span class="hl">бетонн</span>ые (ГОСТ 7473-2010)</div>
<div class="a" style="left:309px;top:814px;width:1082px;height:1px;background:#d6d6d6"></div>
<div class="a" style="left:503px;top:799px;width:1px;height:16px;background:#d6d6d6"></div>
<div class="a" style="left:1106px;top:799px;width:1px;height:16px;background:#d6d6d6"></div>
<div class="a" style="left:1266px;top:799px;width:1px;height:16px;background:#d6d6d6"></div>
<div class="a t g" style="left:396.04px;top:801px;font-size:10px;line-height:13px;color:#1a1a1a;transform:scaleX(0.9495)">ФССЦ-04.3.02.11-0016</div>
<div class="a t g" style="left:505.50px;top:801px;font-size:10px;line-height:13px;color:#1a1a1a;transform:scaleX(0.9722)">Смесь сухая (пескобетон) для устройства полусухой <span class="hl">стяж</span>ки по <span class="hl">бетонн</span>ому основанию полов "БИРСС 7С"</div>
<div class="a t g" style="left:1108.50px;top:801px;font-size:10px;line-height:13px;color:#1a1a1a;transform:scaleX(0.9790)">т</div>
<div class="a t g" style="left:1268.50px;top:801px;font-size:10px;line-height:13px;color:#1a1a1a;transform:scaleX(0.9382)">1 780,58</div>
<div class="a" style="left:309px;top:815px;width:1082px;height:15px;background:#c5c9e8"></div>
<div class="a" style="left:309px;top:830px;width:1082px;height:1px;background:#d6d6d6"></div>
<svg class="a" style="left:310.5px;top:818.5px;" width="9" height="9" viewBox="0 0 9 9"><defs><linearGradient id="exg" x1="0" y1="0" x2="0" y2="1"><stop offset="0" stop-color="#ffffff"/><stop offset="1" stop-color="#dcdcdc"/></linearGradient></defs><rect x=".5" y=".5" width="7" height="6.5" rx="1.5" fill="url(#exg)" stroke="#a0a0a0" stroke-width="1"/><rect x="2" y="3.2" width="4" height="1.2" fill="#5868b0"/></svg>
<div class="a t g" style="left:321.70px;top:817px;font-size:10px;line-height:13px;color:#1a1a1a;font-weight:bold;transform:scaleX(0.9214)">НАЙДЕНО В СОСТАВЕ РАБОТ</div>
<div class="a" style="left:309px;top:831px;width:1082px;height:15px;background:#fff"></div>
<div class="a" style="left:309px;top:846px;width:1082px;height:1px;background:#d6d6d6"></div>
<svg class="a" style="left:321.5px;top:834.5px;" width="9" height="9" viewBox="0 0 9 9"><defs><linearGradient id="exg" x1="0" y1="0" x2="0" y2="1"><stop offset="0" stop-color="#ffffff"/><stop offset="1" stop-color="#dcdcdc"/></linearGradient></defs><rect x=".5" y=".5" width="7" height="6.5" rx="1.5" fill="url(#exg)" stroke="#a0a0a0" stroke-width="1"/><rect x="2" y="3.2" width="4" height="1.2" fill="#5868b0"/><rect x="3.4" y="1.8" width="1.2" height="4" fill="#5868b0"/></svg>
<div class="a t g" style="left:332.32px;top:833px;font-size:10px;line-height:13px;color:#1a1a1a;transform:scaleX(0.9986)">Укладка ряда базовых модульных <span class="hl">бетонн</span>ых блоков на выравнивающую цементную <span class="hl">стяж</span>ку.</div>
<div class="a" style="left:1390px;top:207px;width:1px;height:640px;background:#d0d0d0"></div>
<div class="a" style="left:1484px;top:186px;width:14px;height:762px;background:#f0f0f0"></div>
<svg class="a" style="left:1487px;top:191px;" width="9" height="6" viewBox="0 0 9 6"><path d="M0.7 5.3 L4.5 1.5 L8.3 5.3" fill="none" stroke="#b0b0b0" stroke-width="1.4"/></svg>
<svg class="a" style="left:1487px;top:937px;" width="9" height="6" viewBox="0 0 9 6"><path d="M0.7 0.7 L4.5 4.5 L8.3 0.7" fill="none" stroke="#b0b0b0" stroke-width="1.4"/></svg>
<div class="a" style="left:1px;top:948px;width:304px;height:14px;background:#f0f0f0"></div>
<div class="a" style="left:16px;top:949px;width:126px;height:12px;background:#cdcdcd"></div>
<svg class="a" style="left:5px;top:952px;" width="6" height="7" viewBox="0 0 6 7"><path d="M5 0.8 L1.4 3.5 L5 6.2" fill="none" stroke="#444" stroke-width="1.7"/></svg>
<svg class="a" style="left:294px;top:952px;" width="6" height="7" viewBox="0 0 6 7"><path d="M1 0.8 L4.6 3.5 L1 6.2" fill="none" stroke="#444" stroke-width="1.7"/></svg>
<div class="a" style="left:309px;top:948px;width:1189px;height:14px;background:#f0f0f0"></div>
<div class="a" style="left:324px;top:949px;width:381px;height:12px;background:#cdcdcd"></div>
<svg class="a" style="left:313px;top:952px;" width="6" height="7" viewBox="0 0 6 7"><path d="M5 0.8 L1.4 3.5 L5 6.2" fill="none" stroke="#444" stroke-width="1.7"/></svg>
<svg class="a" style="left:1473px;top:952px;" width="6" height="7" viewBox="0 0 6 7"><path d="M1 0.8 L4.6 3.5 L1 6.2" fill="none" stroke="#444" stroke-width="1.7"/></svg>
<div class="a" style="left:1px;top:962px;width:1497px;height:24px;background:linear-gradient(#dfe9f6,#bdcee5);border-top:1px solid #f0f0f0;border-bottom:0"></div>
<div class="a" style="left:1px;top:963px;width:1497px;height:1px;background:#a7bad2"></div>
<div class="a" style="left:1381px;top:964px;width:1px;height:21px;background:linear-gradient(#c8d6e8,#a8bad2)"></div>
<svg class="a" style="left:1389px;top:965px;" width="16" height="15" viewBox="0 0 16 15"><path d="M8 0.8 L15.3 14.2 L0.7 14.2 Z" fill="#f6cf2a" stroke="#3a3a3a" stroke-width="1"/><path d="M8 5v5" stroke="#111" stroke-width="1.8"/><rect x="7.1" y="11" width="1.8" height="1.8" fill="#111"/></svg>
<div class="a t" style="left:1406px;top:966.40px;font-size:12px;line-height:14.40px;color:#1e2a3a;transform:scaleX(0.8897);">Сообщений: 1</div>
<svg class="a" style="left:1488px;top:975px;" width="9" height="9" viewBox="0 0 9 9"><rect x="7" y="1" width="1.5" height="1.5" fill="#8296b0"/><rect x="4" y="4" width="1.5" height="1.5" fill="#8296b0"/><rect x="7" y="4" width="1.5" height="1.5" fill="#8296b0"/><rect x="1" y="7" width="1.5" height="1.5" fill="#8296b0"/><rect x="4" y="7" width="1.5" height="1.5" fill="#8296b0"/><rect x="7" y="7" width="1.5" height="1.5" fill="#8296b0"/></svg>
<svg class="a" style="left:0;top:0;overflow:visible" width="1" height="1"><defs><filter id="ash" x="-20%" y="-50%" width="140%" height="200%"><feGaussianBlur stdDeviation="1.6"/></filter></defs><path d="M243.3 240.4 L291.0 240.4 L291.0 231.5 L317.0 244.7 L291.0 257.9 L291.0 249.0 L243.3 249.0 A4.3 4.3 0 0 1 243.3 240.4 Z" fill="rgba(0,0,0,.45)" transform="translate(1.5,2.5)" filter="url(#ash)"/><path d="M243.3 240.4 L291.0 240.4 L291.0 231.5 L317.0 244.7 L291.0 257.9 L291.0 249.0 L243.3 249.0 A4.3 4.3 0 0 1 243.3 240.4 Z" fill="#fd4141"/></svg>
<svg class="a" style="left:0;top:0;overflow:visible" width="1" height="1"><defs><filter id="ash" x="-20%" y="-50%" width="140%" height="200%"><feGaussianBlur stdDeviation="1.6"/></filter></defs><path d="M239.3 334.8 L287.0 334.8 L287.0 325.9 L313.0 339.1 L287.0 352.3 L287.0 343.4 L239.3 343.4 A4.3 4.3 0 0 1 239.3 334.8 Z" fill="rgba(0,0,0,.45)" transform="translate(1.5,2.5)" filter="url(#ash)"/><path d="M239.3 334.8 L287.0 334.8 L287.0 325.9 L313.0 339.1 L287.0 352.3 L287.0 343.4 L239.3 343.4 A4.3 4.3 0 0 1 239.3 334.8 Z" fill="#fd4141"/></svg>
<svg class="a" style="left:0;top:0;overflow:visible" width="1" height="1"><defs><filter id="ash" x="-20%" y="-50%" width="140%" height="200%"><feGaussianBlur stdDeviation="1.6"/></filter></defs><path d="M234.3 417.2 L282.0 417.2 L282.0 408.3 L308.0 421.5 L282.0 434.7 L282.0 425.8 L234.3 425.8 A4.3 4.3 0 0 1 234.3 417.2 Z" fill="rgba(0,0,0,.45)" transform="translate(1.5,2.5)" filter="url(#ash)"/><path d="M234.3 417.2 L282.0 417.2 L282.0 408.3 L308.0 421.5 L282.0 434.7 L282.0 425.8 L234.3 425.8 A4.3 4.3 0 0 1 234.3 417.2 Z" fill="#fd4141"/></svg>
<svg class="a" style="left:0;top:0;overflow:visible" width="1" height="1"><defs><filter id="ash" x="-20%" y="-50%" width="140%" height="200%"><feGaussianBlur stdDeviation="1.6"/></filter></defs><path d="M236.5 480.6 L284.2 480.6 L284.2 471.7 L310.2 484.9 L284.2 498.1 L284.2 489.2 L236.5 489.2 A4.3 4.3 0 0 1 236.5 480.6 Z" fill="rgba(0,0,0,.45)" transform="translate(1.5,2.5)" filter="url(#ash)"/><path d="M236.5 480.6 L284.2 480.6 L284.2 471.7 L310.2 484.9 L284.2 498.1 L284.2 489.2 L236.5 489.2 A4.3 4.3 0 0 1 236.5 480.6 Z" fill="#fd4141"/></svg>
<svg class="a" style="left:0;top:0;overflow:visible" width="1" height="1"><defs><filter id="ash" x="-20%" y="-50%" width="140%" height="200%"><feGaussianBlur stdDeviation="1.6"/></filter></defs><path d="M240.3 575.0 L288.0 575.0 L288.0 566.1 L314.0 579.3 L288.0 592.5 L288.0 583.6 L240.3 583.6 A4.3 4.3 0 0 1 240.3 575.0 Z" fill="rgba(0,0,0,.45)" transform="translate(1.5,2.5)" filter="url(#ash)"/><path d="M240.3 575.0 L288.0 575.0 L288.0 566.1 L314.0 579.3 L288.0 592.5 L288.0 583.6 L240.3 583.6 A4.3 4.3 0 0 1 240.3 575.0 Z" fill="#fd4141"/></svg>
<svg class="a" style="left:0;top:0;overflow:visible" width="1" height="1"><defs><filter id="ash" x="-20%" y="-50%" width="140%" height="200%"><feGaussianBlur stdDeviation="1.6"/></filter></defs><path d="M239.8 656.0 L287.5 656.0 L287.5 647.1 L313.5 660.3 L287.5 673.5 L287.5 664.6 L239.8 664.6 A4.3 4.3 0 0 1 239.8 656.0 Z" fill="rgba(0,0,0,.45)" transform="translate(1.5,2.5)" filter="url(#ash)"/><path d="M239.8 656.0 L287.5 656.0 L287.5 647.1 L313.5 660.3 L287.5 673.5 L287.5 664.6 L239.8 664.6 A4.3 4.3 0 0 1 239.8 656.0 Z" fill="#fd4141"/></svg>
<svg class="a" style="left:0;top:0;overflow:visible" width="1" height="1"><defs><filter id="ash" x="-20%" y="-50%" width="140%" height="200%"><feGaussianBlur stdDeviation="1.6"/></filter></defs><path d="M238.9 719.9 L286.6 719.9 L286.6 711.0 L312.6 724.2 L286.6 737.4 L286.6 728.5 L238.9 728.5 A4.3 4.3 0 0 1 238.9 719.9 Z" fill="rgba(0,0,0,.45)" transform="translate(1.5,2.5)" filter="url(#ash)"/><path d="M238.9 719.9 L286.6 719.9 L286.6 711.0 L312.6 724.2 L286.6 737.4 L286.6 728.5 L238.9 728.5 A4.3 4.3 0 0 1 238.9 719.9 Z" fill="#fd4141"/></svg>
<svg class="a" style="left:626px;top:157px;" width="12" height="20" viewBox="0 0 12 20"><path d="M0.5 0.5 L0.5 15.5 L4 12.2 L6.6 18.2 L9 17.2 L6.5 11.3 L11 11.3 Z" fill="#fff" stroke="#000" stroke-width="1"/></svg>
<div class="a" style="left:0px;top:0px;width:1499px;height:986px;border:1px solid #2b88d8;pointer-events:none"></div></body></html>
